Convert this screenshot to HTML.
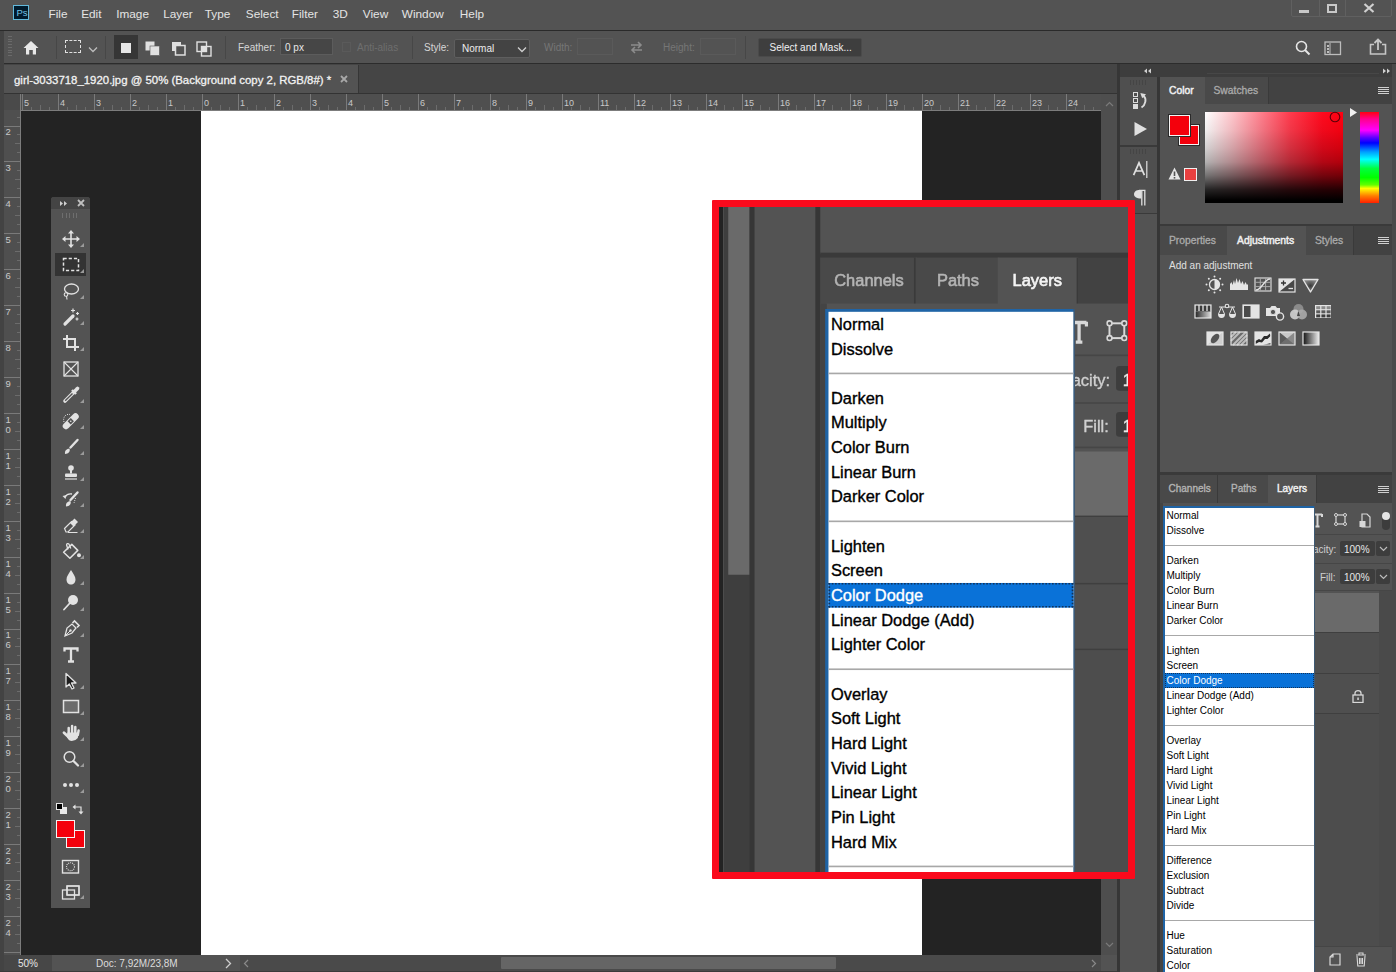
<!DOCTYPE html><html><head><meta charset="utf-8"><style>html,body{margin:0;padding:0}body{width:1396px;height:972px;overflow:hidden;position:relative;background:#535353;font-family:"Liberation Sans", sans-serif}</style></head><body><div style="position:absolute;left:0px;top:0px;width:1396px;height:30px;background:#535353;"></div><div style="position:absolute;left:0px;top:30px;width:1396px;height:1px;background:#2a2a2a;"></div><div style="position:absolute;left:13px;top:5px;width:16px;height:15px;background:#001a2c;box-sizing:border-box;border:1.2px solid #62b9dc;"></div><div style="position:absolute;left:16.5px;top:7.96px;font-size:9.5px;line-height:9.5px;color:#74c3e6;white-space:nowrap;">Ps</div><div style="position:absolute;left:48.5px;top:8.61px;font-size:11.8px;line-height:11.8px;color:#e4e4e4;white-space:nowrap;">File</div><div style="position:absolute;left:81.2px;top:8.61px;font-size:11.8px;line-height:11.8px;color:#e4e4e4;white-space:nowrap;">Edit</div><div style="position:absolute;left:116.2px;top:8.61px;font-size:11.8px;line-height:11.8px;color:#e4e4e4;white-space:nowrap;">Image</div><div style="position:absolute;left:163.20000000000002px;top:8.61px;font-size:11.8px;line-height:11.8px;color:#e4e4e4;white-space:nowrap;">Layer</div><div style="position:absolute;left:204.8px;top:8.61px;font-size:11.8px;line-height:11.8px;color:#e4e4e4;white-space:nowrap;">Type</div><div style="position:absolute;left:245.8px;top:8.61px;font-size:11.8px;line-height:11.8px;color:#e4e4e4;white-space:nowrap;">Select</div><div style="position:absolute;left:291.8px;top:8.61px;font-size:11.8px;line-height:11.8px;color:#e4e4e4;white-space:nowrap;">Filter</div><div style="position:absolute;left:332.8px;top:8.61px;font-size:11.8px;line-height:11.8px;color:#e4e4e4;white-space:nowrap;">3D</div><div style="position:absolute;left:362.8px;top:8.61px;font-size:11.8px;line-height:11.8px;color:#e4e4e4;white-space:nowrap;">View</div><div style="position:absolute;left:401.8px;top:8.61px;font-size:11.8px;line-height:11.8px;color:#e4e4e4;white-space:nowrap;">Window</div><div style="position:absolute;left:459.8px;top:8.61px;font-size:11.8px;line-height:11.8px;color:#e4e4e4;white-space:nowrap;">Help</div><div style="position:absolute;left:1291px;top:-1px;width:101px;height:18px;background:transparent;box-sizing:border-box;border:1px solid #606060;border-radius:0 0 2px 2px;"></div><div style="position:absolute;left:1319px;top:0px;width:1px;height:17px;background:#606060;"></div><div style="position:absolute;left:1345px;top:0px;width:1px;height:17px;background:#606060;"></div><div style="position:absolute;left:1299px;top:10px;width:10px;height:3px;background:#c8c8c8;"></div><div style="position:absolute;left:1327px;top:4px;width:10px;height:9px;background:transparent;box-sizing:border-box;border:2px solid #c8c8c8;"></div><svg style="position:absolute;left:1363px;top:3px;" width="12" height="10" viewBox="0 0 12 10"><path d="M1.5 1 L10.5 9 M10.5 1 L1.5 9" stroke="#d0d0d0" stroke-width="2.2"/></svg><div style="position:absolute;left:0px;top:31px;width:1396px;height:33px;background:#535353;"></div><div style="position:absolute;left:0px;top:63px;width:1396px;height:1px;background:#2c2c2c;"></div><div style="position:absolute;left:0px;top:31px;width:4px;height:941px;background:#434343;"></div><div style="position:absolute;left:8px;top:36.0px;width:4px;height:1px;background:#6a6a6a;"></div><div style="position:absolute;left:8px;top:38.7px;width:4px;height:1px;background:#6a6a6a;"></div><div style="position:absolute;left:8px;top:41.4px;width:4px;height:1px;background:#6a6a6a;"></div><div style="position:absolute;left:8px;top:44.1px;width:4px;height:1px;background:#6a6a6a;"></div><div style="position:absolute;left:8px;top:46.8px;width:4px;height:1px;background:#6a6a6a;"></div><div style="position:absolute;left:8px;top:49.5px;width:4px;height:1px;background:#6a6a6a;"></div><div style="position:absolute;left:8px;top:52.2px;width:4px;height:1px;background:#6a6a6a;"></div><div style="position:absolute;left:8px;top:54.900000000000006px;width:4px;height:1px;background:#6a6a6a;"></div><svg style="position:absolute;left:23px;top:40px;" width="16" height="15" viewBox="0 0 16 15"><path d="M8 1 L15.5 8 L13 8 L13 14.5 L9.8 14.5 L9.8 10 L6.2 10 L6.2 14.5 L3 14.5 L3 8 L0.5 8 Z" fill="#e8e8e8"/></svg><div style="position:absolute;left:56px;top:36px;width:1px;height:23px;background:#474747;"></div><div style="position:absolute;left:65px;top:40px;width:16px;height:13px;background:transparent;box-sizing:border-box;border:1.5px dashed #e0e0e0;"></div><svg style="position:absolute;left:88px;top:46px;" width="10" height="7" viewBox="0 0 10 7"><path d="M1 1.5 L5 5.5 L9 1.5" stroke="#bdbdbd" stroke-width="1.3" fill="none"/></svg><div style="position:absolute;left:105px;top:36px;width:1px;height:23px;background:#474747;"></div><div style="position:absolute;left:114px;top:35px;width:24px;height:24px;background:#363636;"></div><div style="position:absolute;left:121px;top:43px;width:10px;height:10px;background:#e6e6e6;"></div><svg style="position:absolute;left:145px;top:41px;" width="15" height="15" viewBox="0 0 15 15"><rect x="0.5" y="0.5" width="9" height="9" fill="#e0e0e0"/><rect x="5" y="5" width="9.5" height="9.5" fill="#e0e0e0" stroke="#535353" stroke-width="0.6"/></svg><svg style="position:absolute;left:171px;top:41px;" width="15" height="15" viewBox="0 0 15 15"><rect x="1" y="1" width="9" height="9" fill="#e0e0e0"/><rect x="4.5" y="4.5" width="9.5" height="9.5" fill="#535353" stroke="#e0e0e0" stroke-width="1.5"/></svg><svg style="position:absolute;left:196px;top:41px;" width="16" height="16" viewBox="0 0 16 16"><rect x="1" y="1" width="9.5" height="9.5" fill="none" stroke="#e0e0e0" stroke-width="1.4"/><rect x="5.5" y="5.5" width="9.5" height="9.5" fill="none" stroke="#e0e0e0" stroke-width="1.4"/><rect x="5.5" y="5.5" width="5" height="5" fill="#e0e0e0"/></svg><div style="position:absolute;left:225px;top:36px;width:1px;height:23px;background:#474747;"></div><div style="position:absolute;left:238px;top:42.83px;font-size:10px;line-height:10px;color:#d6d6d6;white-space:nowrap;">Feather:</div><div style="position:absolute;left:280px;top:38px;width:53px;height:17px;background:#464646;box-sizing:border-box;border:1px solid #5c5c5c;"></div><div style="position:absolute;left:285px;top:42.83px;font-size:10px;line-height:10px;color:#e8e8e8;white-space:nowrap;">0 px</div><div style="position:absolute;left:342px;top:42px;width:9px;height:10px;background:transparent;box-sizing:border-box;border:1px solid #5a5a5a;"></div><div style="position:absolute;left:357px;top:42.83px;font-size:10px;line-height:10px;color:#6e6e6e;white-space:nowrap;">Anti-alias</div><div style="position:absolute;left:412px;top:36px;width:1px;height:23px;background:#474747;"></div><div style="position:absolute;left:424px;top:42.83px;font-size:10px;line-height:10px;color:#d6d6d6;white-space:nowrap;">Style:</div><div style="position:absolute;left:454px;top:39px;width:76px;height:19px;background:#434343;box-sizing:border-box;border:1px solid #5e5e5e;border-radius:2px;"></div><div style="position:absolute;left:462px;top:43.53px;font-size:10px;line-height:10px;color:#ececec;white-space:nowrap;">Normal</div><svg style="position:absolute;left:517px;top:46px;" width="10" height="7" viewBox="0 0 10 7"><path d="M1 1.5 L5 5.5 L9 1.5" stroke="#cfcfcf" stroke-width="1.3" fill="none"/></svg><div style="position:absolute;left:544px;top:42.83px;font-size:10px;line-height:10px;color:#767676;white-space:nowrap;">Width:</div><div style="position:absolute;left:577px;top:38px;width:36px;height:17px;background:transparent;box-sizing:border-box;border:1px solid #5a5a5a;"></div><svg style="position:absolute;left:629px;top:40px;" width="15" height="15" viewBox="0 0 15 15"><path d="M2 5 L12 5 M9 2 L12 5 L9 8 M13 10 L3 10 M6 7 L3 10 L6 13" stroke="#8c8c8c" stroke-width="1.6" fill="none"/></svg><div style="position:absolute;left:663px;top:42.83px;font-size:10px;line-height:10px;color:#767676;white-space:nowrap;">Height:</div><div style="position:absolute;left:700px;top:38px;width:36px;height:17px;background:transparent;box-sizing:border-box;border:1px solid #5a5a5a;"></div><div style="position:absolute;left:745px;top:36px;width:1px;height:23px;background:#474747;"></div><div style="position:absolute;left:758px;top:38px;width:104px;height:19px;background:#3e3e3e;box-sizing:border-box;border:1px solid #4a4a4a;border-radius:2px;"></div><div style="position:absolute;left:769.5px;top:42.53px;font-size:10px;line-height:10px;color:#f0f0f0;white-space:nowrap;">Select and Mask...</div><svg style="position:absolute;left:1295px;top:40px;" width="16" height="16" viewBox="0 0 16 16"><circle cx="6.5" cy="6.5" r="5" stroke="#e6e6e6" stroke-width="1.6" fill="none"/><path d="M10 10 L14.5 14.5" stroke="#e6e6e6" stroke-width="2"/></svg><svg style="position:absolute;left:1324px;top:41px;" width="18" height="15" viewBox="0 0 18 15"><rect x="1" y="1" width="15.5" height="12.5" stroke="#bdbdbd" stroke-width="1.3" fill="none"/><rect x="3" y="4" width="2" height="2" fill="#bdbdbd"/><rect x="3" y="7" width="2" height="2" fill="#bdbdbd"/><rect x="3" y="10" width="2" height="2" fill="#bdbdbd"/><path d="M6 2 L6 13" stroke="#bdbdbd"/></svg><svg style="position:absolute;left:1369px;top:38px;" width="18" height="18" viewBox="0 0 18 18"><path d="M5 6.5 L1.5 6.5 L1.5 16 L16.5 16 L16.5 6.5 L13 6.5" stroke="#c6c6c6" stroke-width="1.6" fill="none"/><path d="M9 12 L9 2 M5.5 5 L9 1.5 L12.5 5" stroke="#c6c6c6" stroke-width="1.8" fill="none"/></svg><div style="position:absolute;left:4px;top:64px;width:1113px;height:29px;background:#454545;"></div><div style="position:absolute;left:4px;top:65px;width:354px;height:28px;background:#535353;"></div><div style="position:absolute;left:14px;top:74.83px;font-size:11.42px;line-height:11.42px;color:#f2f2f2;white-space:nowrap;-webkit-text-stroke:0.3px #f2f2f2;">girl-3033718_1920.jpg @ 50% (Background copy 2, RGB/8#) *</div><div style="position:absolute;left:358px;top:65px;width:1px;height:28px;background:#363636;"></div><svg style="position:absolute;left:340px;top:75px;" width="8" height="8" viewBox="0 0 8 8"><path d="M1 1 L7 7 M7 1 L1 7" stroke="#a8a8a8" stroke-width="1.8"/></svg><div style="position:absolute;left:4px;top:93px;width:1113px;height:1px;background:#333333;"></div><div style="position:absolute;left:4px;top:94px;width:1097px;height:17px;background:#4f4f4f;"></div><div style="position:absolute;left:4px;top:111px;width:17px;height:844px;background:#4f4f4f;"></div><div style="position:absolute;left:21px;top:110px;width:1080px;height:1px;background:#7c7c7c;"></div><div style="position:absolute;left:20px;top:94px;width:1px;height:861px;background:#7c7c7c;"></div><div style="position:absolute;left:4px;top:94px;width:16px;height:16px;background:#4a4a4a;"></div><div style="position:absolute;left:22px;top:94px;width:1px;height:16px;background:#7a7a7a;"></div><div style="position:absolute;left:24px;top:99.38px;font-size:9px;line-height:9px;color:#c9c9c9;white-space:nowrap;">5</div><div style="position:absolute;left:31px;top:107px;width:1px;height:3px;background:#6c6c6c;"></div><div style="position:absolute;left:40px;top:105px;width:1px;height:5px;background:#6c6c6c;"></div><div style="position:absolute;left:49px;top:107px;width:1px;height:3px;background:#6c6c6c;"></div><div style="position:absolute;left:58px;top:94px;width:1px;height:16px;background:#7a7a7a;"></div><div style="position:absolute;left:60px;top:99.38px;font-size:9px;line-height:9px;color:#c9c9c9;white-space:nowrap;">4</div><div style="position:absolute;left:67px;top:107px;width:1px;height:3px;background:#6c6c6c;"></div><div style="position:absolute;left:76px;top:105px;width:1px;height:5px;background:#6c6c6c;"></div><div style="position:absolute;left:85px;top:107px;width:1px;height:3px;background:#6c6c6c;"></div><div style="position:absolute;left:94px;top:94px;width:1px;height:16px;background:#7a7a7a;"></div><div style="position:absolute;left:96px;top:99.38px;font-size:9px;line-height:9px;color:#c9c9c9;white-space:nowrap;">3</div><div style="position:absolute;left:103px;top:107px;width:1px;height:3px;background:#6c6c6c;"></div><div style="position:absolute;left:112px;top:105px;width:1px;height:5px;background:#6c6c6c;"></div><div style="position:absolute;left:121px;top:107px;width:1px;height:3px;background:#6c6c6c;"></div><div style="position:absolute;left:130px;top:94px;width:1px;height:16px;background:#7a7a7a;"></div><div style="position:absolute;left:132px;top:99.38px;font-size:9px;line-height:9px;color:#c9c9c9;white-space:nowrap;">2</div><div style="position:absolute;left:139px;top:107px;width:1px;height:3px;background:#6c6c6c;"></div><div style="position:absolute;left:148px;top:105px;width:1px;height:5px;background:#6c6c6c;"></div><div style="position:absolute;left:157px;top:107px;width:1px;height:3px;background:#6c6c6c;"></div><div style="position:absolute;left:166px;top:94px;width:1px;height:16px;background:#7a7a7a;"></div><div style="position:absolute;left:168px;top:99.38px;font-size:9px;line-height:9px;color:#c9c9c9;white-space:nowrap;">1</div><div style="position:absolute;left:175px;top:107px;width:1px;height:3px;background:#6c6c6c;"></div><div style="position:absolute;left:184px;top:105px;width:1px;height:5px;background:#6c6c6c;"></div><div style="position:absolute;left:193px;top:107px;width:1px;height:3px;background:#6c6c6c;"></div><div style="position:absolute;left:202px;top:94px;width:1px;height:16px;background:#7a7a7a;"></div><div style="position:absolute;left:204px;top:99.38px;font-size:9px;line-height:9px;color:#c9c9c9;white-space:nowrap;">0</div><div style="position:absolute;left:211px;top:107px;width:1px;height:3px;background:#6c6c6c;"></div><div style="position:absolute;left:220px;top:105px;width:1px;height:5px;background:#6c6c6c;"></div><div style="position:absolute;left:229px;top:107px;width:1px;height:3px;background:#6c6c6c;"></div><div style="position:absolute;left:238px;top:94px;width:1px;height:16px;background:#7a7a7a;"></div><div style="position:absolute;left:240px;top:99.38px;font-size:9px;line-height:9px;color:#c9c9c9;white-space:nowrap;">1</div><div style="position:absolute;left:247px;top:107px;width:1px;height:3px;background:#6c6c6c;"></div><div style="position:absolute;left:256px;top:105px;width:1px;height:5px;background:#6c6c6c;"></div><div style="position:absolute;left:265px;top:107px;width:1px;height:3px;background:#6c6c6c;"></div><div style="position:absolute;left:274px;top:94px;width:1px;height:16px;background:#7a7a7a;"></div><div style="position:absolute;left:276px;top:99.38px;font-size:9px;line-height:9px;color:#c9c9c9;white-space:nowrap;">2</div><div style="position:absolute;left:283px;top:107px;width:1px;height:3px;background:#6c6c6c;"></div><div style="position:absolute;left:292px;top:105px;width:1px;height:5px;background:#6c6c6c;"></div><div style="position:absolute;left:301px;top:107px;width:1px;height:3px;background:#6c6c6c;"></div><div style="position:absolute;left:310px;top:94px;width:1px;height:16px;background:#7a7a7a;"></div><div style="position:absolute;left:312px;top:99.38px;font-size:9px;line-height:9px;color:#c9c9c9;white-space:nowrap;">3</div><div style="position:absolute;left:319px;top:107px;width:1px;height:3px;background:#6c6c6c;"></div><div style="position:absolute;left:328px;top:105px;width:1px;height:5px;background:#6c6c6c;"></div><div style="position:absolute;left:337px;top:107px;width:1px;height:3px;background:#6c6c6c;"></div><div style="position:absolute;left:346px;top:94px;width:1px;height:16px;background:#7a7a7a;"></div><div style="position:absolute;left:348px;top:99.38px;font-size:9px;line-height:9px;color:#c9c9c9;white-space:nowrap;">4</div><div style="position:absolute;left:355px;top:107px;width:1px;height:3px;background:#6c6c6c;"></div><div style="position:absolute;left:364px;top:105px;width:1px;height:5px;background:#6c6c6c;"></div><div style="position:absolute;left:373px;top:107px;width:1px;height:3px;background:#6c6c6c;"></div><div style="position:absolute;left:382px;top:94px;width:1px;height:16px;background:#7a7a7a;"></div><div style="position:absolute;left:384px;top:99.38px;font-size:9px;line-height:9px;color:#c9c9c9;white-space:nowrap;">5</div><div style="position:absolute;left:391px;top:107px;width:1px;height:3px;background:#6c6c6c;"></div><div style="position:absolute;left:400px;top:105px;width:1px;height:5px;background:#6c6c6c;"></div><div style="position:absolute;left:409px;top:107px;width:1px;height:3px;background:#6c6c6c;"></div><div style="position:absolute;left:418px;top:94px;width:1px;height:16px;background:#7a7a7a;"></div><div style="position:absolute;left:420px;top:99.38px;font-size:9px;line-height:9px;color:#c9c9c9;white-space:nowrap;">6</div><div style="position:absolute;left:427px;top:107px;width:1px;height:3px;background:#6c6c6c;"></div><div style="position:absolute;left:436px;top:105px;width:1px;height:5px;background:#6c6c6c;"></div><div style="position:absolute;left:445px;top:107px;width:1px;height:3px;background:#6c6c6c;"></div><div style="position:absolute;left:454px;top:94px;width:1px;height:16px;background:#7a7a7a;"></div><div style="position:absolute;left:456px;top:99.38px;font-size:9px;line-height:9px;color:#c9c9c9;white-space:nowrap;">7</div><div style="position:absolute;left:463px;top:107px;width:1px;height:3px;background:#6c6c6c;"></div><div style="position:absolute;left:472px;top:105px;width:1px;height:5px;background:#6c6c6c;"></div><div style="position:absolute;left:481px;top:107px;width:1px;height:3px;background:#6c6c6c;"></div><div style="position:absolute;left:490px;top:94px;width:1px;height:16px;background:#7a7a7a;"></div><div style="position:absolute;left:492px;top:99.38px;font-size:9px;line-height:9px;color:#c9c9c9;white-space:nowrap;">8</div><div style="position:absolute;left:499px;top:107px;width:1px;height:3px;background:#6c6c6c;"></div><div style="position:absolute;left:508px;top:105px;width:1px;height:5px;background:#6c6c6c;"></div><div style="position:absolute;left:517px;top:107px;width:1px;height:3px;background:#6c6c6c;"></div><div style="position:absolute;left:526px;top:94px;width:1px;height:16px;background:#7a7a7a;"></div><div style="position:absolute;left:528px;top:99.38px;font-size:9px;line-height:9px;color:#c9c9c9;white-space:nowrap;">9</div><div style="position:absolute;left:535px;top:107px;width:1px;height:3px;background:#6c6c6c;"></div><div style="position:absolute;left:544px;top:105px;width:1px;height:5px;background:#6c6c6c;"></div><div style="position:absolute;left:553px;top:107px;width:1px;height:3px;background:#6c6c6c;"></div><div style="position:absolute;left:562px;top:94px;width:1px;height:16px;background:#7a7a7a;"></div><div style="position:absolute;left:564px;top:99.38px;font-size:9px;line-height:9px;color:#c9c9c9;white-space:nowrap;">10</div><div style="position:absolute;left:571px;top:107px;width:1px;height:3px;background:#6c6c6c;"></div><div style="position:absolute;left:580px;top:105px;width:1px;height:5px;background:#6c6c6c;"></div><div style="position:absolute;left:589px;top:107px;width:1px;height:3px;background:#6c6c6c;"></div><div style="position:absolute;left:598px;top:94px;width:1px;height:16px;background:#7a7a7a;"></div><div style="position:absolute;left:600px;top:99.38px;font-size:9px;line-height:9px;color:#c9c9c9;white-space:nowrap;">11</div><div style="position:absolute;left:607px;top:107px;width:1px;height:3px;background:#6c6c6c;"></div><div style="position:absolute;left:616px;top:105px;width:1px;height:5px;background:#6c6c6c;"></div><div style="position:absolute;left:625px;top:107px;width:1px;height:3px;background:#6c6c6c;"></div><div style="position:absolute;left:634px;top:94px;width:1px;height:16px;background:#7a7a7a;"></div><div style="position:absolute;left:636px;top:99.38px;font-size:9px;line-height:9px;color:#c9c9c9;white-space:nowrap;">12</div><div style="position:absolute;left:643px;top:107px;width:1px;height:3px;background:#6c6c6c;"></div><div style="position:absolute;left:652px;top:105px;width:1px;height:5px;background:#6c6c6c;"></div><div style="position:absolute;left:661px;top:107px;width:1px;height:3px;background:#6c6c6c;"></div><div style="position:absolute;left:670px;top:94px;width:1px;height:16px;background:#7a7a7a;"></div><div style="position:absolute;left:672px;top:99.38px;font-size:9px;line-height:9px;color:#c9c9c9;white-space:nowrap;">13</div><div style="position:absolute;left:679px;top:107px;width:1px;height:3px;background:#6c6c6c;"></div><div style="position:absolute;left:688px;top:105px;width:1px;height:5px;background:#6c6c6c;"></div><div style="position:absolute;left:697px;top:107px;width:1px;height:3px;background:#6c6c6c;"></div><div style="position:absolute;left:706px;top:94px;width:1px;height:16px;background:#7a7a7a;"></div><div style="position:absolute;left:708px;top:99.38px;font-size:9px;line-height:9px;color:#c9c9c9;white-space:nowrap;">14</div><div style="position:absolute;left:715px;top:107px;width:1px;height:3px;background:#6c6c6c;"></div><div style="position:absolute;left:724px;top:105px;width:1px;height:5px;background:#6c6c6c;"></div><div style="position:absolute;left:733px;top:107px;width:1px;height:3px;background:#6c6c6c;"></div><div style="position:absolute;left:742px;top:94px;width:1px;height:16px;background:#7a7a7a;"></div><div style="position:absolute;left:744px;top:99.38px;font-size:9px;line-height:9px;color:#c9c9c9;white-space:nowrap;">15</div><div style="position:absolute;left:751px;top:107px;width:1px;height:3px;background:#6c6c6c;"></div><div style="position:absolute;left:760px;top:105px;width:1px;height:5px;background:#6c6c6c;"></div><div style="position:absolute;left:769px;top:107px;width:1px;height:3px;background:#6c6c6c;"></div><div style="position:absolute;left:778px;top:94px;width:1px;height:16px;background:#7a7a7a;"></div><div style="position:absolute;left:780px;top:99.38px;font-size:9px;line-height:9px;color:#c9c9c9;white-space:nowrap;">16</div><div style="position:absolute;left:787px;top:107px;width:1px;height:3px;background:#6c6c6c;"></div><div style="position:absolute;left:796px;top:105px;width:1px;height:5px;background:#6c6c6c;"></div><div style="position:absolute;left:805px;top:107px;width:1px;height:3px;background:#6c6c6c;"></div><div style="position:absolute;left:814px;top:94px;width:1px;height:16px;background:#7a7a7a;"></div><div style="position:absolute;left:816px;top:99.38px;font-size:9px;line-height:9px;color:#c9c9c9;white-space:nowrap;">17</div><div style="position:absolute;left:823px;top:107px;width:1px;height:3px;background:#6c6c6c;"></div><div style="position:absolute;left:832px;top:105px;width:1px;height:5px;background:#6c6c6c;"></div><div style="position:absolute;left:841px;top:107px;width:1px;height:3px;background:#6c6c6c;"></div><div style="position:absolute;left:850px;top:94px;width:1px;height:16px;background:#7a7a7a;"></div><div style="position:absolute;left:852px;top:99.38px;font-size:9px;line-height:9px;color:#c9c9c9;white-space:nowrap;">18</div><div style="position:absolute;left:859px;top:107px;width:1px;height:3px;background:#6c6c6c;"></div><div style="position:absolute;left:868px;top:105px;width:1px;height:5px;background:#6c6c6c;"></div><div style="position:absolute;left:877px;top:107px;width:1px;height:3px;background:#6c6c6c;"></div><div style="position:absolute;left:886px;top:94px;width:1px;height:16px;background:#7a7a7a;"></div><div style="position:absolute;left:888px;top:99.38px;font-size:9px;line-height:9px;color:#c9c9c9;white-space:nowrap;">19</div><div style="position:absolute;left:895px;top:107px;width:1px;height:3px;background:#6c6c6c;"></div><div style="position:absolute;left:904px;top:105px;width:1px;height:5px;background:#6c6c6c;"></div><div style="position:absolute;left:913px;top:107px;width:1px;height:3px;background:#6c6c6c;"></div><div style="position:absolute;left:922px;top:94px;width:1px;height:16px;background:#7a7a7a;"></div><div style="position:absolute;left:924px;top:99.38px;font-size:9px;line-height:9px;color:#c9c9c9;white-space:nowrap;">20</div><div style="position:absolute;left:931px;top:107px;width:1px;height:3px;background:#6c6c6c;"></div><div style="position:absolute;left:940px;top:105px;width:1px;height:5px;background:#6c6c6c;"></div><div style="position:absolute;left:949px;top:107px;width:1px;height:3px;background:#6c6c6c;"></div><div style="position:absolute;left:958px;top:94px;width:1px;height:16px;background:#7a7a7a;"></div><div style="position:absolute;left:960px;top:99.38px;font-size:9px;line-height:9px;color:#c9c9c9;white-space:nowrap;">21</div><div style="position:absolute;left:967px;top:107px;width:1px;height:3px;background:#6c6c6c;"></div><div style="position:absolute;left:976px;top:105px;width:1px;height:5px;background:#6c6c6c;"></div><div style="position:absolute;left:985px;top:107px;width:1px;height:3px;background:#6c6c6c;"></div><div style="position:absolute;left:994px;top:94px;width:1px;height:16px;background:#7a7a7a;"></div><div style="position:absolute;left:996px;top:99.38px;font-size:9px;line-height:9px;color:#c9c9c9;white-space:nowrap;">22</div><div style="position:absolute;left:1003px;top:107px;width:1px;height:3px;background:#6c6c6c;"></div><div style="position:absolute;left:1012px;top:105px;width:1px;height:5px;background:#6c6c6c;"></div><div style="position:absolute;left:1021px;top:107px;width:1px;height:3px;background:#6c6c6c;"></div><div style="position:absolute;left:1030px;top:94px;width:1px;height:16px;background:#7a7a7a;"></div><div style="position:absolute;left:1032px;top:99.38px;font-size:9px;line-height:9px;color:#c9c9c9;white-space:nowrap;">23</div><div style="position:absolute;left:1039px;top:107px;width:1px;height:3px;background:#6c6c6c;"></div><div style="position:absolute;left:1048px;top:105px;width:1px;height:5px;background:#6c6c6c;"></div><div style="position:absolute;left:1057px;top:107px;width:1px;height:3px;background:#6c6c6c;"></div><div style="position:absolute;left:1066px;top:94px;width:1px;height:16px;background:#7a7a7a;"></div><div style="position:absolute;left:1068px;top:99.38px;font-size:9px;line-height:9px;color:#c9c9c9;white-space:nowrap;">24</div><div style="position:absolute;left:1075px;top:107px;width:1px;height:3px;background:#6c6c6c;"></div><div style="position:absolute;left:1084px;top:105px;width:1px;height:5px;background:#6c6c6c;"></div><div style="position:absolute;left:1093px;top:107px;width:1px;height:3px;background:#6c6c6c;"></div><div style="position:absolute;left:17px;top:117px;width:3px;height:1px;background:#6c6c6c;"></div><div style="position:absolute;left:4px;top:126px;width:16px;height:1px;background:#7a7a7a;"></div><div style="position:absolute;left:5.5px;top:127.46px;font-size:9.5px;line-height:9.5px;color:#c9c9c9;white-space:nowrap;">2</div><div style="position:absolute;left:17px;top:134px;width:3px;height:1px;background:#6c6c6c;"></div><div style="position:absolute;left:15px;top:143px;width:5px;height:1px;background:#6c6c6c;"></div><div style="position:absolute;left:17px;top:152px;width:3px;height:1px;background:#6c6c6c;"></div><div style="position:absolute;left:4px;top:161px;width:16px;height:1px;background:#7a7a7a;"></div><div style="position:absolute;left:5.5px;top:163.39px;font-size:9.5px;line-height:9.5px;color:#c9c9c9;white-space:nowrap;">3</div><div style="position:absolute;left:17px;top:170px;width:3px;height:1px;background:#6c6c6c;"></div><div style="position:absolute;left:15px;top:179px;width:5px;height:1px;background:#6c6c6c;"></div><div style="position:absolute;left:17px;top:188px;width:3px;height:1px;background:#6c6c6c;"></div><div style="position:absolute;left:4px;top:197px;width:16px;height:1px;background:#7a7a7a;"></div><div style="position:absolute;left:5.5px;top:199.32px;font-size:9.5px;line-height:9.5px;color:#c9c9c9;white-space:nowrap;">4</div><div style="position:absolute;left:17px;top:206px;width:3px;height:1px;background:#6c6c6c;"></div><div style="position:absolute;left:15px;top:215px;width:5px;height:1px;background:#6c6c6c;"></div><div style="position:absolute;left:17px;top:224px;width:3px;height:1px;background:#6c6c6c;"></div><div style="position:absolute;left:4px;top:233px;width:16px;height:1px;background:#7a7a7a;"></div><div style="position:absolute;left:5.5px;top:235.25px;font-size:9.5px;line-height:9.5px;color:#c9c9c9;white-space:nowrap;">5</div><div style="position:absolute;left:17px;top:242px;width:3px;height:1px;background:#6c6c6c;"></div><div style="position:absolute;left:15px;top:251px;width:5px;height:1px;background:#6c6c6c;"></div><div style="position:absolute;left:17px;top:260px;width:3px;height:1px;background:#6c6c6c;"></div><div style="position:absolute;left:4px;top:269px;width:16px;height:1px;background:#7a7a7a;"></div><div style="position:absolute;left:5.5px;top:271.18px;font-size:9.5px;line-height:9.5px;color:#c9c9c9;white-space:nowrap;">6</div><div style="position:absolute;left:17px;top:278px;width:3px;height:1px;background:#6c6c6c;"></div><div style="position:absolute;left:15px;top:287px;width:5px;height:1px;background:#6c6c6c;"></div><div style="position:absolute;left:17px;top:296px;width:3px;height:1px;background:#6c6c6c;"></div><div style="position:absolute;left:4px;top:305px;width:16px;height:1px;background:#7a7a7a;"></div><div style="position:absolute;left:5.5px;top:307.11px;font-size:9.5px;line-height:9.5px;color:#c9c9c9;white-space:nowrap;">7</div><div style="position:absolute;left:17px;top:314px;width:3px;height:1px;background:#6c6c6c;"></div><div style="position:absolute;left:15px;top:323px;width:5px;height:1px;background:#6c6c6c;"></div><div style="position:absolute;left:17px;top:332px;width:3px;height:1px;background:#6c6c6c;"></div><div style="position:absolute;left:4px;top:341px;width:16px;height:1px;background:#7a7a7a;"></div><div style="position:absolute;left:5.5px;top:343.04px;font-size:9.5px;line-height:9.5px;color:#c9c9c9;white-space:nowrap;">8</div><div style="position:absolute;left:17px;top:350px;width:3px;height:1px;background:#6c6c6c;"></div><div style="position:absolute;left:15px;top:359px;width:5px;height:1px;background:#6c6c6c;"></div><div style="position:absolute;left:17px;top:368px;width:3px;height:1px;background:#6c6c6c;"></div><div style="position:absolute;left:4px;top:377px;width:16px;height:1px;background:#7a7a7a;"></div><div style="position:absolute;left:5.5px;top:378.97px;font-size:9.5px;line-height:9.5px;color:#c9c9c9;white-space:nowrap;">9</div><div style="position:absolute;left:17px;top:386px;width:3px;height:1px;background:#6c6c6c;"></div><div style="position:absolute;left:15px;top:395px;width:5px;height:1px;background:#6c6c6c;"></div><div style="position:absolute;left:17px;top:404px;width:3px;height:1px;background:#6c6c6c;"></div><div style="position:absolute;left:4px;top:413px;width:16px;height:1px;background:#7a7a7a;"></div><div style="position:absolute;left:5.5px;top:414.90px;font-size:9.5px;line-height:9.5px;color:#c9c9c9;white-space:nowrap;">1</div><div style="position:absolute;left:5.5px;top:424.90px;font-size:9.5px;line-height:9.5px;color:#c9c9c9;white-space:nowrap;">0</div><div style="position:absolute;left:17px;top:422px;width:3px;height:1px;background:#6c6c6c;"></div><div style="position:absolute;left:15px;top:431px;width:5px;height:1px;background:#6c6c6c;"></div><div style="position:absolute;left:17px;top:440px;width:3px;height:1px;background:#6c6c6c;"></div><div style="position:absolute;left:4px;top:449px;width:16px;height:1px;background:#7a7a7a;"></div><div style="position:absolute;left:5.5px;top:450.83px;font-size:9.5px;line-height:9.5px;color:#c9c9c9;white-space:nowrap;">1</div><div style="position:absolute;left:5.5px;top:460.83px;font-size:9.5px;line-height:9.5px;color:#c9c9c9;white-space:nowrap;">1</div><div style="position:absolute;left:17px;top:458px;width:3px;height:1px;background:#6c6c6c;"></div><div style="position:absolute;left:15px;top:467px;width:5px;height:1px;background:#6c6c6c;"></div><div style="position:absolute;left:17px;top:476px;width:3px;height:1px;background:#6c6c6c;"></div><div style="position:absolute;left:4px;top:485px;width:16px;height:1px;background:#7a7a7a;"></div><div style="position:absolute;left:5.5px;top:486.76px;font-size:9.5px;line-height:9.5px;color:#c9c9c9;white-space:nowrap;">1</div><div style="position:absolute;left:5.5px;top:496.76px;font-size:9.5px;line-height:9.5px;color:#c9c9c9;white-space:nowrap;">2</div><div style="position:absolute;left:17px;top:494px;width:3px;height:1px;background:#6c6c6c;"></div><div style="position:absolute;left:15px;top:503px;width:5px;height:1px;background:#6c6c6c;"></div><div style="position:absolute;left:17px;top:512px;width:3px;height:1px;background:#6c6c6c;"></div><div style="position:absolute;left:4px;top:521px;width:16px;height:1px;background:#7a7a7a;"></div><div style="position:absolute;left:5.5px;top:522.69px;font-size:9.5px;line-height:9.5px;color:#c9c9c9;white-space:nowrap;">1</div><div style="position:absolute;left:5.5px;top:532.69px;font-size:9.5px;line-height:9.5px;color:#c9c9c9;white-space:nowrap;">3</div><div style="position:absolute;left:17px;top:530px;width:3px;height:1px;background:#6c6c6c;"></div><div style="position:absolute;left:15px;top:539px;width:5px;height:1px;background:#6c6c6c;"></div><div style="position:absolute;left:17px;top:548px;width:3px;height:1px;background:#6c6c6c;"></div><div style="position:absolute;left:4px;top:557px;width:16px;height:1px;background:#7a7a7a;"></div><div style="position:absolute;left:5.5px;top:558.62px;font-size:9.5px;line-height:9.5px;color:#c9c9c9;white-space:nowrap;">1</div><div style="position:absolute;left:5.5px;top:568.62px;font-size:9.5px;line-height:9.5px;color:#c9c9c9;white-space:nowrap;">4</div><div style="position:absolute;left:17px;top:566px;width:3px;height:1px;background:#6c6c6c;"></div><div style="position:absolute;left:15px;top:575px;width:5px;height:1px;background:#6c6c6c;"></div><div style="position:absolute;left:17px;top:584px;width:3px;height:1px;background:#6c6c6c;"></div><div style="position:absolute;left:4px;top:593px;width:16px;height:1px;background:#7a7a7a;"></div><div style="position:absolute;left:5.5px;top:594.55px;font-size:9.5px;line-height:9.5px;color:#c9c9c9;white-space:nowrap;">1</div><div style="position:absolute;left:5.5px;top:604.55px;font-size:9.5px;line-height:9.5px;color:#c9c9c9;white-space:nowrap;">5</div><div style="position:absolute;left:17px;top:602px;width:3px;height:1px;background:#6c6c6c;"></div><div style="position:absolute;left:15px;top:611px;width:5px;height:1px;background:#6c6c6c;"></div><div style="position:absolute;left:17px;top:620px;width:3px;height:1px;background:#6c6c6c;"></div><div style="position:absolute;left:4px;top:629px;width:16px;height:1px;background:#7a7a7a;"></div><div style="position:absolute;left:5.5px;top:630.48px;font-size:9.5px;line-height:9.5px;color:#c9c9c9;white-space:nowrap;">1</div><div style="position:absolute;left:5.5px;top:640.48px;font-size:9.5px;line-height:9.5px;color:#c9c9c9;white-space:nowrap;">6</div><div style="position:absolute;left:17px;top:638px;width:3px;height:1px;background:#6c6c6c;"></div><div style="position:absolute;left:15px;top:646px;width:5px;height:1px;background:#6c6c6c;"></div><div style="position:absolute;left:17px;top:655px;width:3px;height:1px;background:#6c6c6c;"></div><div style="position:absolute;left:4px;top:664px;width:16px;height:1px;background:#7a7a7a;"></div><div style="position:absolute;left:5.5px;top:666.41px;font-size:9.5px;line-height:9.5px;color:#c9c9c9;white-space:nowrap;">1</div><div style="position:absolute;left:5.5px;top:676.41px;font-size:9.5px;line-height:9.5px;color:#c9c9c9;white-space:nowrap;">7</div><div style="position:absolute;left:17px;top:673px;width:3px;height:1px;background:#6c6c6c;"></div><div style="position:absolute;left:15px;top:682px;width:5px;height:1px;background:#6c6c6c;"></div><div style="position:absolute;left:17px;top:691px;width:3px;height:1px;background:#6c6c6c;"></div><div style="position:absolute;left:4px;top:700px;width:16px;height:1px;background:#7a7a7a;"></div><div style="position:absolute;left:5.5px;top:702.34px;font-size:9.5px;line-height:9.5px;color:#c9c9c9;white-space:nowrap;">1</div><div style="position:absolute;left:5.5px;top:712.34px;font-size:9.5px;line-height:9.5px;color:#c9c9c9;white-space:nowrap;">8</div><div style="position:absolute;left:17px;top:709px;width:3px;height:1px;background:#6c6c6c;"></div><div style="position:absolute;left:15px;top:718px;width:5px;height:1px;background:#6c6c6c;"></div><div style="position:absolute;left:17px;top:727px;width:3px;height:1px;background:#6c6c6c;"></div><div style="position:absolute;left:4px;top:736px;width:16px;height:1px;background:#7a7a7a;"></div><div style="position:absolute;left:5.5px;top:738.27px;font-size:9.5px;line-height:9.5px;color:#c9c9c9;white-space:nowrap;">1</div><div style="position:absolute;left:5.5px;top:748.27px;font-size:9.5px;line-height:9.5px;color:#c9c9c9;white-space:nowrap;">9</div><div style="position:absolute;left:17px;top:745px;width:3px;height:1px;background:#6c6c6c;"></div><div style="position:absolute;left:15px;top:754px;width:5px;height:1px;background:#6c6c6c;"></div><div style="position:absolute;left:17px;top:763px;width:3px;height:1px;background:#6c6c6c;"></div><div style="position:absolute;left:4px;top:772px;width:16px;height:1px;background:#7a7a7a;"></div><div style="position:absolute;left:5.5px;top:774.20px;font-size:9.5px;line-height:9.5px;color:#c9c9c9;white-space:nowrap;">2</div><div style="position:absolute;left:5.5px;top:784.20px;font-size:9.5px;line-height:9.5px;color:#c9c9c9;white-space:nowrap;">0</div><div style="position:absolute;left:17px;top:781px;width:3px;height:1px;background:#6c6c6c;"></div><div style="position:absolute;left:15px;top:790px;width:5px;height:1px;background:#6c6c6c;"></div><div style="position:absolute;left:17px;top:799px;width:3px;height:1px;background:#6c6c6c;"></div><div style="position:absolute;left:4px;top:808px;width:16px;height:1px;background:#7a7a7a;"></div><div style="position:absolute;left:5.5px;top:810.13px;font-size:9.5px;line-height:9.5px;color:#c9c9c9;white-space:nowrap;">2</div><div style="position:absolute;left:5.5px;top:820.13px;font-size:9.5px;line-height:9.5px;color:#c9c9c9;white-space:nowrap;">1</div><div style="position:absolute;left:17px;top:817px;width:3px;height:1px;background:#6c6c6c;"></div><div style="position:absolute;left:15px;top:826px;width:5px;height:1px;background:#6c6c6c;"></div><div style="position:absolute;left:17px;top:835px;width:3px;height:1px;background:#6c6c6c;"></div><div style="position:absolute;left:4px;top:844px;width:16px;height:1px;background:#7a7a7a;"></div><div style="position:absolute;left:5.5px;top:846.06px;font-size:9.5px;line-height:9.5px;color:#c9c9c9;white-space:nowrap;">2</div><div style="position:absolute;left:5.5px;top:856.06px;font-size:9.5px;line-height:9.5px;color:#c9c9c9;white-space:nowrap;">2</div><div style="position:absolute;left:17px;top:853px;width:3px;height:1px;background:#6c6c6c;"></div><div style="position:absolute;left:15px;top:862px;width:5px;height:1px;background:#6c6c6c;"></div><div style="position:absolute;left:17px;top:871px;width:3px;height:1px;background:#6c6c6c;"></div><div style="position:absolute;left:4px;top:880px;width:16px;height:1px;background:#7a7a7a;"></div><div style="position:absolute;left:5.5px;top:881.99px;font-size:9.5px;line-height:9.5px;color:#c9c9c9;white-space:nowrap;">2</div><div style="position:absolute;left:5.5px;top:891.99px;font-size:9.5px;line-height:9.5px;color:#c9c9c9;white-space:nowrap;">3</div><div style="position:absolute;left:17px;top:889px;width:3px;height:1px;background:#6c6c6c;"></div><div style="position:absolute;left:15px;top:898px;width:5px;height:1px;background:#6c6c6c;"></div><div style="position:absolute;left:17px;top:907px;width:3px;height:1px;background:#6c6c6c;"></div><div style="position:absolute;left:4px;top:916px;width:16px;height:1px;background:#7a7a7a;"></div><div style="position:absolute;left:5.5px;top:917.92px;font-size:9.5px;line-height:9.5px;color:#c9c9c9;white-space:nowrap;">2</div><div style="position:absolute;left:5.5px;top:927.92px;font-size:9.5px;line-height:9.5px;color:#c9c9c9;white-space:nowrap;">4</div><div style="position:absolute;left:17px;top:925px;width:3px;height:1px;background:#6c6c6c;"></div><div style="position:absolute;left:15px;top:934px;width:5px;height:1px;background:#6c6c6c;"></div><div style="position:absolute;left:17px;top:943px;width:3px;height:1px;background:#6c6c6c;"></div><div style="position:absolute;left:4px;top:952px;width:16px;height:1px;background:#7a7a7a;"></div><div style="position:absolute;left:5.5px;top:953.85px;font-size:9.5px;line-height:9.5px;color:#c9c9c9;white-space:nowrap;">2</div><div style="position:absolute;left:5.5px;top:963.85px;font-size:9.5px;line-height:9.5px;color:#c9c9c9;white-space:nowrap;">5</div><div style="position:absolute;left:21px;top:111px;width:1080px;height:844px;background:#232323;"></div><div style="position:absolute;left:201px;top:111px;width:721px;height:844px;background:#ffffff;"></div><div style="position:absolute;left:4px;top:955px;width:1113px;height:17px;background:#535353;"></div><div style="position:absolute;left:4px;top:955px;width:48px;height:16px;background:#474747;"></div><div style="position:absolute;left:18px;top:958.53px;font-size:10px;line-height:10px;color:#e6e6e6;white-space:nowrap;">50%</div><div style="position:absolute;left:96px;top:958.53px;font-size:10px;line-height:10px;color:#dcdcdc;white-space:nowrap;">Doc: 7,92M/23,8M</div><svg style="position:absolute;left:225px;top:958px;" width="7" height="11" viewBox="0 0 7 11"><path d="M1 1 L5.5 5.5 L1 10" stroke="#cfcfcf" stroke-width="1.3" fill="none"/></svg><div style="position:absolute;left:240px;top:955px;width:861px;height:16px;background:#4a4a4a;"></div><svg style="position:absolute;left:243px;top:959px;" width="6" height="9" viewBox="0 0 6 9"><path d="M5 1 L1.5 4.5 L5 8" stroke="#8a8a8a" stroke-width="1.2" fill="none"/></svg><div style="position:absolute;left:501px;top:957px;width:335px;height:12px;background:#656565;border-radius:1px;"></div><svg style="position:absolute;left:1091px;top:959px;" width="6" height="9" viewBox="0 0 6 9"><path d="M1 1 L4.5 4.5 L1 8" stroke="#8a8a8a" stroke-width="1.2" fill="none"/></svg><div style="position:absolute;left:0px;top:971px;width:1396px;height:1px;background:#3a3a3a;"></div><div style="position:absolute;left:51px;top:197px;width:39px;height:711px;background:#535353;border-radius:3px 3px 0 0;"></div><div style="position:absolute;left:51px;top:197px;width:39px;height:12px;background:#444444;border-radius:3px 3px 0 0;"></div><svg style="position:absolute;left:59px;top:200px;" width="10" height="7" viewBox="0 0 10 7"><path d="M1 1 L4 3.5 L1 6 Z M5 1 L8 3.5 L5 6 Z" fill="#cfcfcf"/></svg><svg style="position:absolute;left:77px;top:199px;" width="8" height="8" viewBox="0 0 8 8"><path d="M1 1 L7 7 M7 1 L1 7" stroke="#bfbfbf" stroke-width="1.8"/></svg><div style="position:absolute;left:62.0px;top:213px;width:1px;height:5px;background:#6e6e6e;"></div><div style="position:absolute;left:65.5px;top:213px;width:1px;height:5px;background:#6e6e6e;"></div><div style="position:absolute;left:69.0px;top:213px;width:1px;height:5px;background:#6e6e6e;"></div><div style="position:absolute;left:72.5px;top:213px;width:1px;height:5px;background:#6e6e6e;"></div><div style="position:absolute;left:76.0px;top:213px;width:1px;height:5px;background:#6e6e6e;"></div><div style="position:absolute;left:55px;top:253px;width:31px;height:23px;background:#333333;"></div><svg style="position:absolute;left:60.5px;top:229px;" width="20" height="20" viewBox="0 0 20 20"><path d="M10 3 L10 17 M3 10 L17 10" stroke="#e2e2e2" stroke-width="1.6"/><path d="M10 1 L13 4.5 L7 4.5 Z M10 19 L13 15.5 L7 15.5 Z M1 10 L4.5 7 L4.5 13 Z M19 10 L15.5 7 L15.5 13 Z" fill="#e2e2e2"/></svg><svg style="position:absolute;left:80px;top:243px;" width="4" height="4" viewBox="0 0 4 4"><path d="M4 0 L4 4 L0 4 Z" fill="#9a9a9a"/></svg><svg style="position:absolute;left:60.5px;top:255px;" width="20" height="20" viewBox="0 0 20 20"><rect x="2.5" y="3.5" width="15" height="12" fill="none" stroke="#e2e2e2" stroke-width="1.5" stroke-dasharray="3.2 2"/></svg><svg style="position:absolute;left:80px;top:269px;" width="4" height="4" viewBox="0 0 4 4"><path d="M4 0 L4 4 L0 4 Z" fill="#9a9a9a"/></svg><svg style="position:absolute;left:60.5px;top:281px;" width="20" height="20" viewBox="0 0 20 20"><ellipse cx="10.5" cy="8" rx="7" ry="5" fill="none" stroke="#e2e2e2" stroke-width="1.3"/><circle cx="5" cy="13.5" r="1.8" fill="none" stroke="#e2e2e2" stroke-width="1.1"/><path d="M5.5 15 L6 18.5" stroke="#e2e2e2" stroke-width="1.1"/></svg><svg style="position:absolute;left:80px;top:295px;" width="4" height="4" viewBox="0 0 4 4"><path d="M4 0 L4 4 L0 4 Z" fill="#9a9a9a"/></svg><svg style="position:absolute;left:60.5px;top:307px;" width="20" height="20" viewBox="0 0 20 20"><path d="M4 17 L12 9" stroke="#e2e2e2" stroke-width="3.2" stroke-linecap="round"/><path d="M12 1.5 L12 5.5 M10 3.5 L14 3.5 M16.5 5 L16.5 8 M15 6.5 L18 6.5 M16 10.5 L16 13.5 M14.5 12 L17.5 12" stroke="#e2e2e2" stroke-width="1.2"/></svg><svg style="position:absolute;left:80px;top:321px;" width="4" height="4" viewBox="0 0 4 4"><path d="M4 0 L4 4 L0 4 Z" fill="#9a9a9a"/></svg><svg style="position:absolute;left:60.5px;top:333px;" width="20" height="20" viewBox="0 0 20 20"><path d="M6 2 L6 14 L18 14 M2 6 L14 6 L14 18" stroke="#e2e2e2" stroke-width="2" fill="none"/></svg><svg style="position:absolute;left:80px;top:347px;" width="4" height="4" viewBox="0 0 4 4"><path d="M4 0 L4 4 L0 4 Z" fill="#9a9a9a"/></svg><svg style="position:absolute;left:60.5px;top:359px;" width="20" height="20" viewBox="0 0 20 20"><rect x="3" y="3" width="14" height="14" fill="none" stroke="#e2e2e2" stroke-width="1.3"/><path d="M3 3 L17 17 M17 3 L3 17" stroke="#e2e2e2" stroke-width="1.1"/></svg><svg style="position:absolute;left:60.5px;top:385px;" width="20" height="20" viewBox="0 0 20 20"><path d="M4 16 L12 8" stroke="#e2e2e2" stroke-width="3.6" stroke-linecap="round"/><path d="M4.2 15.8 L11.5 8.5" stroke="#535353" stroke-width="1.4"/><path d="M11 5 L15 9" stroke="#e2e2e2" stroke-width="2.4"/><path d="M13.5 6.5 L16.5 3.5" stroke="#e2e2e2" stroke-width="3.6" stroke-linecap="round"/></svg><svg style="position:absolute;left:80px;top:399px;" width="4" height="4" viewBox="0 0 4 4"><path d="M4 0 L4 4 L0 4 Z" fill="#9a9a9a"/></svg><svg style="position:absolute;left:60.5px;top:411px;" width="20" height="20" viewBox="0 0 20 20"><path d="M5 15 L14.5 5.5" stroke="#e2e2e2" stroke-width="6.5" stroke-linecap="round"/><rect x="7.5" y="8" width="4.5" height="4.5" transform="rotate(45 9.75 10.25)" fill="#535353"/><circle cx="9.75" cy="10.25" r="0.8" fill="#e2e2e2"/><path d="M3 11 C1.5 6 5 2.5 9 3.5" stroke="#e2e2e2" stroke-width="1" stroke-dasharray="1 1.2" fill="none"/></svg><svg style="position:absolute;left:80px;top:425px;" width="4" height="4" viewBox="0 0 4 4"><path d="M4 0 L4 4 L0 4 Z" fill="#9a9a9a"/></svg><svg style="position:absolute;left:60.5px;top:437px;" width="20" height="20" viewBox="0 0 20 20"><path d="M9.5 10.5 L16.5 3" stroke="#e2e2e2" stroke-width="2.4" stroke-linecap="round"/><path d="M4 17 C3.5 14 5.5 11.5 8.5 11.8 C9.5 14.5 7.5 17 4 17 Z" fill="#e2e2e2"/></svg><svg style="position:absolute;left:80px;top:451px;" width="4" height="4" viewBox="0 0 4 4"><path d="M4 0 L4 4 L0 4 Z" fill="#9a9a9a"/></svg><svg style="position:absolute;left:60.5px;top:463px;" width="20" height="20" viewBox="0 0 20 20"><circle cx="10" cy="5" r="2.8" fill="#e2e2e2"/><path d="M10 7 L10 10.5" stroke="#e2e2e2" stroke-width="2"/><rect x="4" y="10.5" width="12" height="3.5" rx="1" fill="#e2e2e2"/><path d="M4 16 L16 16" stroke="#e2e2e2" stroke-width="1.2"/></svg><svg style="position:absolute;left:80px;top:477px;" width="4" height="4" viewBox="0 0 4 4"><path d="M4 0 L4 4 L0 4 Z" fill="#9a9a9a"/></svg><svg style="position:absolute;left:60.5px;top:489px;" width="20" height="20" viewBox="0 0 20 20"><path d="M9.5 11 L16.5 3.5" stroke="#e2e2e2" stroke-width="2.4" stroke-linecap="round"/><path d="M5 17.5 C4.5 14.5 6.5 12 9.5 12.3 C10.5 15 8.5 17.5 5 17.5 Z" fill="#e2e2e2"/><path d="M11 5 C8 4.5 5.5 5.5 4 8" stroke="#e2e2e2" stroke-width="1.3" fill="none"/><path d="M1.5 7 L5.5 6 L4.5 10 Z" fill="#e2e2e2"/><path d="M14.5 9 L13 14" stroke="#e2e2e2" stroke-width="1" stroke-dasharray="1 1.2"/></svg><svg style="position:absolute;left:80px;top:503px;" width="4" height="4" viewBox="0 0 4 4"><path d="M4 0 L4 4 L0 4 Z" fill="#9a9a9a"/></svg><svg style="position:absolute;left:60.5px;top:515px;" width="20" height="20" viewBox="0 0 20 20"><path d="M3.5 13.5 L10.5 6.5 L14 10 L7 17 L5 17 Z" fill="none" stroke="#e2e2e2" stroke-width="1.2"/><path d="M9 8 L13.5 3.5 L17 7 L12.5 11.5 Z" fill="#e2e2e2"/><path d="M7 17.5 L16.5 17.5" stroke="#e2e2e2" stroke-width="1"/></svg><svg style="position:absolute;left:80px;top:529px;" width="4" height="4" viewBox="0 0 4 4"><path d="M4 0 L4 4 L0 4 Z" fill="#9a9a9a"/></svg><svg style="position:absolute;left:60.5px;top:541px;" width="20" height="20" viewBox="0 0 20 20"><path d="M2.6 11.3 L10.8 3.4 L16.8 9.4 L8.9 17.3 Z" fill="none" stroke="#e2e2e2" stroke-width="1.5" stroke-linejoin="round"/><path d="M7 8.5 L5.6 4 C5.4 2.6 7.2 2 8 3.2 L9.8 7.5" stroke="#e2e2e2" stroke-width="1.3" fill="none"/><circle cx="18" cy="14.3" r="2" fill="#e2e2e2"/></svg><svg style="position:absolute;left:80px;top:555px;" width="4" height="4" viewBox="0 0 4 4"><path d="M4 0 L4 4 L0 4 Z" fill="#9a9a9a"/></svg><svg style="position:absolute;left:60.5px;top:567px;" width="20" height="20" viewBox="0 0 20 20"><path d="M10 3 C7.5 7 5.5 9.5 5.5 12.5 C5.5 15.5 7.5 17.5 10 17.5 C12.5 17.5 14.5 15.5 14.5 12.5 C14.5 9.5 12.5 7 10 3 Z" fill="#e2e2e2"/></svg><svg style="position:absolute;left:80px;top:581px;" width="4" height="4" viewBox="0 0 4 4"><path d="M4 0 L4 4 L0 4 Z" fill="#9a9a9a"/></svg><svg style="position:absolute;left:60.5px;top:593px;" width="20" height="20" viewBox="0 0 20 20"><circle cx="12" cy="7" r="5" fill="#e2e2e2"/><path d="M8.5 10.5 L3 16.5" stroke="#e2e2e2" stroke-width="1.8" stroke-linecap="round"/></svg><svg style="position:absolute;left:80px;top:607px;" width="4" height="4" viewBox="0 0 4 4"><path d="M4 0 L4 4 L0 4 Z" fill="#9a9a9a"/></svg><svg style="position:absolute;left:60.5px;top:619px;" width="20" height="20" viewBox="0 0 20 20"><path d="M4 17 L6 9 L11 5 L15 9 L11 14 Z" fill="none" stroke="#e2e2e2" stroke-width="1.3"/><path d="M11.5 4 L13.5 2 L18 6.5 L16 8.5" stroke="#e2e2e2" stroke-width="1.6" fill="none"/><path d="M4.5 16.5 L9 12" stroke="#e2e2e2" stroke-width="1"/><circle cx="9.5" cy="11.5" r="1.2" fill="#e2e2e2"/></svg><svg style="position:absolute;left:80px;top:633px;" width="4" height="4" viewBox="0 0 4 4"><path d="M4 0 L4 4 L0 4 Z" fill="#9a9a9a"/></svg><svg style="position:absolute;left:60.5px;top:645px;" width="20" height="20" viewBox="0 0 20 20"><path d="M3.5 6.5 L3.5 3.5 L16.5 3.5 L16.5 6.5 M10 3.5 L10 16.5 M7 16.5 L13 16.5" stroke="#e2e2e2" stroke-width="2.3" fill="none"/></svg><svg style="position:absolute;left:60.5px;top:671px;" width="20" height="20" viewBox="0 0 20 20"><path d="M5 2.5 L5 16 L8.3 13 L11 18 L13 17 L10.5 12 L15 12 Z" fill="#1e1e1e" stroke="#e2e2e2" stroke-width="1.3" stroke-linejoin="round"/></svg><svg style="position:absolute;left:80px;top:685px;" width="4" height="4" viewBox="0 0 4 4"><path d="M4 0 L4 4 L0 4 Z" fill="#9a9a9a"/></svg><svg style="position:absolute;left:60.5px;top:697px;" width="20" height="20" viewBox="0 0 20 20"><rect x="2.5" y="3.5" width="15" height="12" fill="#6c6c6c" stroke="#e2e2e2" stroke-width="1.5"/></svg><svg style="position:absolute;left:80px;top:711px;" width="4" height="4" viewBox="0 0 4 4"><path d="M4 0 L4 4 L0 4 Z" fill="#9a9a9a"/></svg><svg style="position:absolute;left:60.5px;top:723px;" width="20" height="20" viewBox="0 0 20 20"><path d="M7.7 5 L7.7 11 M11.1 3 L11.1 11 M14.3 4 L14.3 11 M17.6 7.5 L16.8 12" stroke="#e2e2e2" stroke-width="2.5" stroke-linecap="round"/><path d="M3 9.8 L7 13.5" stroke="#e2e2e2" stroke-width="2.8" stroke-linecap="round"/><path d="M6.3 9.5 L17.6 9.5 L16.8 15 Q14.5 18 10.8 18 Q8 18 6 14.5 Z" fill="#e2e2e2"/></svg><svg style="position:absolute;left:80px;top:737px;" width="4" height="4" viewBox="0 0 4 4"><path d="M4 0 L4 4 L0 4 Z" fill="#9a9a9a"/></svg><svg style="position:absolute;left:60.5px;top:749px;" width="20" height="20" viewBox="0 0 20 20"><circle cx="8.5" cy="8" r="5.3" fill="none" stroke="#e2e2e2" stroke-width="1.5"/><path d="M12.5 12 L17 16.5" stroke="#e2e2e2" stroke-width="2.2" stroke-linecap="round"/></svg><svg style="position:absolute;left:80px;top:763px;" width="4" height="4" viewBox="0 0 4 4"><path d="M4 0 L4 4 L0 4 Z" fill="#9a9a9a"/></svg><svg style="position:absolute;left:60.5px;top:775px;" width="20" height="20" viewBox="0 0 20 20"><circle cx="4" cy="10" r="2" fill="#e2e2e2"/><circle cx="10" cy="10" r="2" fill="#e2e2e2"/><circle cx="16" cy="10" r="2" fill="#e2e2e2"/></svg><svg style="position:absolute;left:80px;top:789px;" width="4" height="4" viewBox="0 0 4 4"><path d="M4 0 L4 4 L0 4 Z" fill="#9a9a9a"/></svg><div style="position:absolute;left:60px;top:807px;width:7px;height:7px;background:#e8e8e8;"></div><div style="position:absolute;left:56px;top:803px;width:7px;height:7px;background:#000000;box-sizing:border-box;border:1px solid #e8e8e8;"></div><svg style="position:absolute;left:72px;top:803px;" width="12" height="12" viewBox="0 0 12 12"><path d="M2 4 L9 4 L9 10" stroke="#e2e2e2" stroke-width="1.2" fill="none"/><path d="M0.5 4 L3.5 1.5 L3.5 6.5 Z M9 11.5 L6.5 8.5 L11.5 8.5 Z" fill="#e2e2e2"/></svg><div style="position:absolute;left:65.5px;top:830px;width:19px;height:18px;background:#f4000c;box-sizing:border-box;border:1px solid #f4f4f4;"></div><div style="position:absolute;left:56px;top:820px;width:18.5px;height:18px;background:#f4000c;box-sizing:border-box;border:1px solid #f4f4f4;"></div><svg style="position:absolute;left:61px;top:859px;" width="19" height="16" viewBox="0 0 19 16"><rect x="1.5" y="1.5" width="16" height="12.5" fill="none" stroke="#e2e2e2" stroke-width="1.4"/><circle cx="9.5" cy="7.75" r="4" fill="none" stroke="#e2e2e2" stroke-width="1.1" stroke-dasharray="1 1"/></svg><svg style="position:absolute;left:61px;top:885px;" width="20" height="16" viewBox="0 0 20 16"><rect x="6" y="1" width="12" height="9" fill="#535353" stroke="#e2e2e2" stroke-width="1.3"/><rect x="1.5" y="5" width="12" height="9" fill="none" stroke="#e2e2e2" stroke-width="1.3"/><rect x="6" y="1" width="12" height="9" fill="none" stroke="#e2e2e2" stroke-width="1.3"/></svg><svg style="position:absolute;left:80px;top:895px;" width="4" height="4" viewBox="0 0 4 4"><path d="M4 0 L4 4 L0 4 Z" fill="#9a9a9a"/></svg><div style="position:absolute;left:1101px;top:94px;width:16px;height:861px;background:#4e4e4e;"></div><svg style="position:absolute;left:1105px;top:101px;" width="9" height="6" viewBox="0 0 9 6"><path d="M1 5 L4.5 1.5 L8 5" stroke="#7a7a7a" stroke-width="1.2" fill="none"/></svg><svg style="position:absolute;left:1105px;top:942px;" width="9" height="6" viewBox="0 0 9 6"><path d="M1 1 L4.5 4.5 L8 1" stroke="#7a7a7a" stroke-width="1.2" fill="none"/></svg><div style="position:absolute;left:1117px;top:64px;width:3px;height:908px;background:#363636;"></div><div style="position:absolute;left:1120px;top:64px;width:276px;height:13px;background:#3d3d3d;"></div><div style="position:absolute;left:1207px;top:73px;width:172px;height:1px;background:#474747;"></div><svg style="position:absolute;left:1143px;top:68px;" width="9" height="6" viewBox="0 0 9 6"><path d="M4 0.5 L1 3 L4 5.5 Z M8 0.5 L5 3 L8 5.5 Z" fill="#d0d0d0"/></svg><svg style="position:absolute;left:1382px;top:68px;" width="9" height="6" viewBox="0 0 9 6"><path d="M1 0.5 L4 3 L1 5.5 Z M5 0.5 L8 3 L5 5.5 Z" fill="#d0d0d0"/></svg><div style="position:absolute;left:1120px;top:77px;width:37px;height:895px;background:#535353;"></div><div style="position:absolute;left:1120px;top:77px;width:37px;height:68px;background:#4f4f4f;"></div><div style="position:absolute;left:1120px;top:145px;width:37px;height:2px;background:#3a3a3a;"></div><div style="position:absolute;left:1120px;top:147px;width:37px;height:67px;background:#4f4f4f;"></div><div style="position:absolute;left:1120px;top:213px;width:37px;height:1px;background:#3a3a3a;"></div><div style="position:absolute;left:1130px;top:80px;width:1px;height:5px;background:#454545;"></div><div style="position:absolute;left:1130px;top:149px;width:1px;height:5px;background:#454545;"></div><div style="position:absolute;left:1133px;top:80px;width:1px;height:5px;background:#454545;"></div><div style="position:absolute;left:1133px;top:149px;width:1px;height:5px;background:#454545;"></div><div style="position:absolute;left:1136px;top:80px;width:1px;height:5px;background:#454545;"></div><div style="position:absolute;left:1136px;top:149px;width:1px;height:5px;background:#454545;"></div><div style="position:absolute;left:1139px;top:80px;width:1px;height:5px;background:#454545;"></div><div style="position:absolute;left:1139px;top:149px;width:1px;height:5px;background:#454545;"></div><div style="position:absolute;left:1142px;top:80px;width:1px;height:5px;background:#454545;"></div><div style="position:absolute;left:1142px;top:149px;width:1px;height:5px;background:#454545;"></div><div style="position:absolute;left:1145px;top:80px;width:1px;height:5px;background:#454545;"></div><div style="position:absolute;left:1145px;top:149px;width:1px;height:5px;background:#454545;"></div><svg style="position:absolute;left:1132px;top:91px;" width="17" height="19" viewBox="0 0 17 19"><rect x="1.5" y="1.5" width="4" height="4" fill="none" stroke="#dcdcdc" stroke-width="1"/><rect x="1.5" y="7.5" width="4" height="4" fill="none" stroke="#dcdcdc" stroke-width="1"/><rect x="1" y="13" width="5" height="5" fill="#dcdcdc"/><path d="M9.5 16.5 C13.5 14 15 8 11.5 4.8" stroke="#dcdcdc" stroke-width="1.9" fill="none"/><path d="M8.3 2 L14 3.2 L10.2 7.2 Z" fill="#dcdcdc"/></svg><svg style="position:absolute;left:1133px;top:121px;" width="15" height="16" viewBox="0 0 15 16"><path d="M1.5 1 L14 8 L1.5 15 Z" fill="#e0e0e0"/></svg><svg style="position:absolute;left:1132px;top:161px;" width="17" height="18" viewBox="0 0 17 18"><path d="M1.6 14.2 L7 1.8 L12.4 14.2 M3.6 10 L10.4 10" stroke="#e0e0e0" stroke-width="1.7" fill="none"/><path d="M14.8 0 L14.8 17" stroke="#e0e0e0" stroke-width="1.2"/></svg><svg style="position:absolute;left:1133px;top:189px;" width="14" height="18" viewBox="0 0 14 18"><path d="M8.5 1 L8.5 9.5 C3 9.5 1 7.5 1 5.2 C1 2.5 3.5 1 6.5 1 Z" fill="#e0e0e0"/><path d="M6 1.3 L12.5 1.3 M8.8 1 L8.8 16.5 M11.8 1 L11.8 16.5" stroke="#e0e0e0" stroke-width="1.3" fill="none"/></svg><div style="position:absolute;left:1157px;top:77px;width:3px;height:895px;background:#363636;"></div><div style="position:absolute;left:1160px;top:77px;width:232px;height:27px;background:#424242;"></div><div style="position:absolute;left:1160px;top:77px;width:45px;height:27px;background:#535353;"></div><div style="position:absolute;left:1205px;top:77px;width:63px;height:27px;background:#494949;"></div><div style="position:absolute;left:1268px;top:77px;width:1px;height:27px;background:#3a3a3a;"></div><div style="position:absolute;left:1169px;top:85.78px;font-size:10.3px;line-height:10.3px;color:#f0f0f0;white-space:nowrap;-webkit-text-stroke:0.45px #f0f0f0;">Color</div><div style="position:absolute;left:1213.5px;top:85.78px;font-size:10.3px;line-height:10.3px;color:#ababab;white-space:nowrap;-webkit-text-stroke:0.3px #ababab;">Swatches</div><div style="position:absolute;left:1378px;top:87px;width:11px;height:1px;background:#cfcfcf;"></div><div style="position:absolute;left:1378px;top:89px;width:11px;height:1px;background:#cfcfcf;"></div><div style="position:absolute;left:1378px;top:91px;width:11px;height:1px;background:#cfcfcf;"></div><div style="position:absolute;left:1378px;top:93px;width:11px;height:1px;background:#cfcfcf;"></div><div style="position:absolute;left:1160px;top:104px;width:232px;height:120px;background:#535353;"></div><div style="position:absolute;left:1179px;top:125px;width:20px;height:20px;background:#f4000c;box-sizing:border-box;border:1px solid #f4f4f4;outline:1px solid #2a2a2a;"></div><div style="position:absolute;left:1169px;top:115px;width:21px;height:21px;background:#f4000c;box-sizing:border-box;border:1px solid #f4f4f4;outline:1px solid #2a2a2a;"></div><svg style="position:absolute;left:1168px;top:167px;" width="13" height="13" viewBox="0 0 13 13"><path d="M6.5 0.5 L12.5 12.5 L0.5 12.5 Z" fill="#e6e6e6"/><path d="M6.5 4.5 L6.5 9" stroke="#535353" stroke-width="1.6"/><rect x="5.7" y="10" width="1.6" height="1.6" fill="#535353"/></svg><div style="position:absolute;left:1184px;top:168px;width:13px;height:13px;background:#e84040;box-sizing:border-box;border:1px solid #f0f0f0;"></div><div style="position:absolute;left:1205px;top:112px;width:138px;height:91px;background:;background:linear-gradient(to bottom,rgba(0,0,0,0) 0%,rgba(0,0,0,0.06) 20%,rgba(0,0,0,0.18) 40%,rgba(0,0,0,0.3) 55%,rgba(0,0,0,0.55) 70%,rgba(0,0,0,0.85) 85%,#000 97%),linear-gradient(to right,#fff 0%,#ffc4ca 20%,#ff7a88 42%,#ff3a4c 62%,#ff0a1e 85%,#ff0010 100%);"></div><svg style="position:absolute;left:1329px;top:111px;" width="12" height="12" viewBox="0 0 12 12"><circle cx="6" cy="6" r="4.8" stroke="#5a0008" stroke-width="1.1" fill="none"/></svg><div style="position:absolute;left:1360px;top:112px;width:19px;height:91px;background:;background:linear-gradient(to bottom,#ff0010 0%,#ff0090 8%,#f0f 20%,#6000ff 28%,#00f 34%,#00a0ff 44%,#0ff 52%,#00ff40 62%,#0f0 72%,#60ff00 80%,#ff0 84%,#ff8000 92%,#ff2000 100%);"></div><svg style="position:absolute;left:1349px;top:107px;" width="9" height="11" viewBox="0 0 9 11"><path d="M1 1 L8 5.5 L1 10 Z" fill="#f0f0f0"/></svg><div style="position:absolute;left:1160px;top:224px;width:232px;height:2px;background:#3a3a3a;"></div><div style="position:absolute;left:1160px;top:226px;width:232px;height:29px;background:#424242;"></div><div style="position:absolute;left:1160px;top:226px;width:67px;height:29px;background:#494949;"></div><div style="position:absolute;left:1227px;top:226px;width:79px;height:29px;background:#535353;"></div><div style="position:absolute;left:1306px;top:226px;width:47px;height:29px;background:#494949;"></div><div style="position:absolute;left:1353px;top:226px;width:1px;height:29px;background:#3a3a3a;"></div><div style="position:absolute;left:1169px;top:235.78px;font-size:10.3px;line-height:10.3px;color:#ababab;white-space:nowrap;-webkit-text-stroke:0.3px #ababab;">Properties</div><div style="position:absolute;left:1237px;top:235.70px;font-size:10.4px;line-height:10.4px;color:#f0f0f0;white-space:nowrap;-webkit-text-stroke:0.45px #f0f0f0;">Adjustments</div><div style="position:absolute;left:1315px;top:235.78px;font-size:10.3px;line-height:10.3px;color:#ababab;white-space:nowrap;-webkit-text-stroke:0.3px #ababab;">Styles</div><div style="position:absolute;left:1378px;top:237px;width:11px;height:1px;background:#cfcfcf;"></div><div style="position:absolute;left:1378px;top:239px;width:11px;height:1px;background:#cfcfcf;"></div><div style="position:absolute;left:1378px;top:241px;width:11px;height:1px;background:#cfcfcf;"></div><div style="position:absolute;left:1378px;top:243px;width:11px;height:1px;background:#cfcfcf;"></div><div style="position:absolute;left:1160px;top:255px;width:232px;height:217px;background:#535353;"></div><div style="position:absolute;left:1169px;top:261.04px;font-size:10px;line-height:10px;color:#e0e0e0;white-space:nowrap;">Add an adjustment</div><svg style="position:absolute;left:1205px;top:275px;" width="19" height="19" viewBox="0 0 19 19"><circle cx="9.5" cy="9.5" r="5" fill="none" stroke="#e4e4e4" stroke-width="1.3"/><path d="M9.5 4.5 A5 5 0 0 1 9.5 14.5 Z" fill="#e4e4e4"/><circle cx="17.50" cy="9.50" r="1" fill="#e4e4e4"/><circle cx="15.16" cy="15.16" r="1" fill="#e4e4e4"/><circle cx="9.50" cy="17.50" r="1" fill="#e4e4e4"/><circle cx="3.84" cy="15.16" r="1" fill="#e4e4e4"/><circle cx="1.50" cy="9.50" r="1" fill="#e4e4e4"/><circle cx="3.84" cy="3.84" r="1" fill="#e4e4e4"/><circle cx="9.50" cy="1.50" r="1" fill="#e4e4e4"/><circle cx="15.16" cy="3.84" r="1" fill="#e4e4e4"/></svg><svg style="position:absolute;left:1229px;top:277px;" width="20" height="14" viewBox="0 0 20 14"><path d="M1 13 L1 7 L2.5 5 L3.5 8 L5 3 L6 7 L7.5 1 L9 6 L10.5 2 L12 7 L13.5 4 L15 8 L16.5 5 L18 8 L19 7 L19 13 Z" fill="#e4e4e4"/></svg><svg style="position:absolute;left:1254px;top:277px;" width="18" height="15" viewBox="0 0 18 15"><rect x="1" y="1" width="16" height="13" fill="none" stroke="#e4e4e4" stroke-width="1.1"/><path d="M6.3 1 L6.3 14 M11.6 1 L11.6 14 M1 5.3 L17 5.3 M1 9.6 L17 9.6" stroke="#a8a8a8" stroke-width="1"/><path d="M2 13 C8 13 10 2 16 2" stroke="#e4e4e4" stroke-width="1.3" fill="none"/></svg><svg style="position:absolute;left:1278px;top:278px;" width="18" height="15" viewBox="0 0 18 15"><rect x="1" y="1" width="16" height="13" fill="#e4e4e4"/><path d="M17 1 L17 14 L1 14 Z" fill="#484848"/><rect x="1" y="1" width="16" height="13" fill="none" stroke="#e4e4e4" stroke-width="1.2"/><path d="M3 5 L8 5 M5.5 2.5 L5.5 7.5" stroke="#333" stroke-width="1.3"/><path d="M10.5 10.5 L15 10.5" stroke="#e4e4e4" stroke-width="1.3"/></svg><svg style="position:absolute;left:1302px;top:278px;" width="17" height="15" viewBox="0 0 17 15"><defs><radialGradient id="vg"><stop offset="0" stop-color="#3a3a3a"/><stop offset="1" stop-color="#8a8a8a"/></radialGradient></defs><path d="M1 1.5 L16 1.5 L8.5 14 Z" fill="url(#vg)" stroke="#e4e4e4" stroke-width="1.4" stroke-linejoin="round"/></svg><svg style="position:absolute;left:1194px;top:304px;" width="18" height="15" viewBox="0 0 18 15"><defs><linearGradient id="hg"><stop offset="0" stop-color="#222"/><stop offset="1" stop-color="#ddd"/></linearGradient></defs><rect x="1" y="7.5" width="16" height="6.5" fill="url(#hg)"/><rect x="1" y="1" width="16" height="6.5" fill="#777"/><path d="M3 1 L3 7 M7 1 L7 7 M11 1 L11 7 M15 1 L15 7" stroke="#222" stroke-width="1.4"/><path d="M5 1 L5 7 M9 1 L9 7 M13 1 L13 7" stroke="#ccc" stroke-width="1.2"/><rect x="1" y="1" width="16" height="13" fill="none" stroke="#e4e4e4" stroke-width="1.2"/></svg><svg style="position:absolute;left:1217px;top:303px;" width="20" height="17" viewBox="0 0 20 17"><path d="M2 4 L18 4 M10 2 L10 4" stroke="#e4e4e4" stroke-width="1.2"/><circle cx="10" cy="3" r="1.8" fill="#535353" stroke="#e4e4e4" stroke-width="1.1"/><path d="M4.5 4 L1.5 11 M4.5 4 L7.5 11 M15.5 4 L12.5 11 M15.5 4 L18.5 11" stroke="#e4e4e4" stroke-width="1"/><path d="M1 11 L8 11 A3.5 4 0 0 1 1 11 Z M12 11 L19 11 A3.5 4 0 0 1 12 11 Z" fill="#e4e4e4"/></svg><svg style="position:absolute;left:1242px;top:304px;" width="18" height="15" viewBox="0 0 18 15"><rect x="1" y="1" width="16" height="13" fill="#e4e4e4"/><rect x="2" y="2" width="6.5" height="11" fill="#4a4a4a"/><rect x="1" y="1" width="16" height="13" fill="none" stroke="#e4e4e4" stroke-width="1.2"/></svg><svg style="position:absolute;left:1265px;top:303px;" width="20" height="18" viewBox="0 0 20 18"><path d="M1 5 L5 5 L6.5 3 L10.5 3 L12 5 L15 5 L15 13 L1 13 Z" fill="#e4e4e4"/><circle cx="8" cy="9" r="2.6" fill="#535353" stroke="#e4e4e4" stroke-width="0.8"/><circle cx="15" cy="13.5" r="3.6" fill="#535353" stroke="#e4e4e4" stroke-width="1.4"/></svg><svg style="position:absolute;left:1289px;top:303px;" width="19" height="18" viewBox="0 0 19 18"><circle cx="9.5" cy="6" r="5" fill="#8a8a8a"/><circle cx="6" cy="11.5" r="5" fill="#d0d0d0" opacity="0.9"/><circle cx="13" cy="11.5" r="5" fill="#aaaaaa" opacity="0.9"/><path d="M9.5 8 L8 13 L11 13 Z" fill="#444"/></svg><svg style="position:absolute;left:1314px;top:304px;" width="18" height="15" viewBox="0 0 18 15"><rect x="1" y="1" width="16" height="13" fill="#e4e4e4"/><rect x="2.2" y="2.2" width="4" height="3" fill="#8a8a8a"/><rect x="2.2" y="6.3" width="4" height="3" fill="#5a5a5a"/><rect x="2.2" y="10.4" width="4" height="3" fill="#3e3e3e"/><rect x="7.4" y="2.2" width="4" height="3" fill="#8a8a8a"/><rect x="7.4" y="6.3" width="4" height="3" fill="#5a5a5a"/><rect x="7.4" y="10.4" width="4" height="3" fill="#3e3e3e"/><rect x="12.6" y="2.2" width="4" height="3" fill="#8a8a8a"/><rect x="12.6" y="6.3" width="4" height="3" fill="#5a5a5a"/><rect x="12.6" y="10.4" width="4" height="3" fill="#3e3e3e"/></svg><svg style="position:absolute;left:1206px;top:331px;" width="18" height="15" viewBox="0 0 18 15"><rect x="1" y="1" width="16" height="13" fill="#e4e4e4"/><path d="M1 14 L17 1 L17 14 Z" fill="#cfcfcf"/><ellipse cx="9" cy="7.5" rx="3.2" ry="5.5" transform="rotate(40 9 7.5)" fill="#555"/><rect x="1" y="1" width="16" height="13" fill="none" stroke="#e4e4e4" stroke-width="1.2"/></svg><svg style="position:absolute;left:1230px;top:331px;" width="18" height="15" viewBox="0 0 18 15"><rect x="1" y="1" width="16" height="13" fill="#6a6a6a"/><path d="M1 6 L6 1 M1 10 L10 1 M3 14 L16 1 M7 14 L17 4 M11 14 L17 8" stroke="#bdbdbd" stroke-width="2"/><rect x="1" y="1" width="16" height="13" fill="none" stroke="#e4e4e4" stroke-width="1.2"/></svg><svg style="position:absolute;left:1254px;top:331px;" width="18" height="15" viewBox="0 0 18 15"><rect x="1" y="1" width="16" height="13" fill="#e4e4e4"/><path d="M1.5 10 L5 8 L7 9 L10 5 L13 5 L16 2.5 L16.5 5 L13.5 8 L11 8 L8 11.5 L5 11 L1.5 13 Z" fill="#2a2a2a"/><path d="M9 14 L17 12 L17 14 Z" fill="#2a2a2a"/><rect x="1" y="1" width="16" height="13" fill="none" stroke="#e4e4e4" stroke-width="1.2"/></svg><svg style="position:absolute;left:1278px;top:331px;" width="18" height="15" viewBox="0 0 18 15"><rect x="1" y="1" width="16" height="13" fill="#8a8a8a"/><path d="M1 1 L9 7.5 L17 1 Z" fill="#c8c8c8"/><path d="M1 14 L9 7.5 L17 14 Z" fill="#6e6e6e"/><path d="M1 1 L1 14 L9 7.5 Z" fill="#5a5a5a"/><rect x="1" y="1" width="16" height="13" fill="none" stroke="#e4e4e4" stroke-width="1.2"/></svg><svg style="position:absolute;left:1302px;top:331px;" width="18" height="15" viewBox="0 0 18 15"><defs><linearGradient id="gm"><stop offset="0" stop-color="#111"/><stop offset="1" stop-color="#eee"/></linearGradient></defs><rect x="1" y="1" width="16" height="13" fill="url(#gm)" stroke="#e4e4e4" stroke-width="1.2"/></svg><div style="position:absolute;left:1160px;top:472px;width:232px;height:3px;background:#3a3a3a;"></div><div style="position:absolute;left:1160px;top:475px;width:232px;height:28px;background:#424242;"></div><div style="position:absolute;left:1160px;top:475px;width:58px;height:28px;background:#494949;"></div><div style="position:absolute;left:1218px;top:475px;width:50px;height:28px;background:#494949;"></div><div style="position:absolute;left:1268px;top:475px;width:48px;height:28px;background:#535353;"></div><div style="position:absolute;left:1217px;top:475px;width:1px;height:28px;background:#3a3a3a;"></div><div style="position:absolute;left:1316px;top:475px;width:1px;height:28px;background:#3a3a3a;"></div><div style="position:absolute;left:1168.5px;top:483.84px;font-size:10px;line-height:10px;color:#b4b4b4;white-space:nowrap;-webkit-text-stroke:0.35px #b4b4b4;">Channels</div><div style="position:absolute;left:1231px;top:483.84px;font-size:10px;line-height:10px;color:#b4b4b4;white-space:nowrap;-webkit-text-stroke:0.35px #b4b4b4;">Paths</div><div style="position:absolute;left:1277px;top:483.84px;font-size:10px;line-height:10px;color:#f4f4f4;white-space:nowrap;-webkit-text-stroke:0.4px #f4f4f4;">Layers</div><div style="position:absolute;left:1378px;top:486px;width:11px;height:1px;background:#cfcfcf;"></div><div style="position:absolute;left:1378px;top:488px;width:11px;height:1px;background:#cfcfcf;"></div><div style="position:absolute;left:1378px;top:490px;width:11px;height:1px;background:#cfcfcf;"></div><div style="position:absolute;left:1378px;top:492px;width:11px;height:1px;background:#cfcfcf;"></div><div style="position:absolute;left:1160px;top:503px;width:232px;height:444px;background:#535353;"></div><div style="position:absolute;left:1160px;top:534px;width:232px;height:1px;background:#464646;"></div><div style="position:absolute;left:1160px;top:563px;width:232px;height:1px;background:#464646;"></div><div style="position:absolute;left:1160px;top:590px;width:232px;height:1px;background:#464646;"></div><svg style="position:absolute;left:1312px;top:513px;" width="11" height="15" viewBox="0 0 11 15"><path d="M1 1.5 L10 1.5 M5.5 1.5 L5.5 13.5 M3.5 13.5 L7.5 13.5 M1 1 L1 4 M10 1 L10 4" stroke="#d8d8d8" stroke-width="2" fill="none"/></svg><svg style="position:absolute;left:1334px;top:513px;" width="13" height="13" viewBox="0 0 13 13"><rect x="2" y="2" width="9" height="9" fill="none" stroke="#d8d8d8" stroke-width="1.2"/><circle cx="2" cy="2" r="1.5" fill="#535353" stroke="#d8d8d8"/><circle cx="11" cy="2" r="1.5" fill="#535353" stroke="#d8d8d8"/><circle cx="2" cy="11" r="1.5" fill="#535353" stroke="#d8d8d8"/><circle cx="11" cy="11" r="1.5" fill="#535353" stroke="#d8d8d8"/></svg><svg style="position:absolute;left:1359px;top:513px;" width="12" height="15" viewBox="0 0 12 15"><path d="M3 1 L8 1 L11 4 L11 14 L3 14 Z" fill="none" stroke="#d8d8d8" stroke-width="1.2"/><rect x="0.5" y="8" width="6" height="6" fill="#d8d8d8"/></svg><div style="position:absolute;left:1382px;top:512px;width:8px;height:18px;background:#3c3c3c;border-radius:4px;"></div><div style="position:absolute;left:1382px;top:512px;width:8px;height:8px;background:#e6e6e6;border-radius:4px;"></div><div style="position:absolute;left:1313px;top:544.53px;font-size:10px;line-height:10px;color:#d0d0d0;white-space:nowrap;">acity:</div><div style="position:absolute;left:1340px;top:541px;width:35px;height:15px;background:#3d3d3d;border-radius:2px;"></div><div style="position:absolute;left:1344px;top:544.53px;font-size:10px;line-height:10px;color:#e8e8e8;white-space:nowrap;">100%</div><div style="position:absolute;left:1376px;top:541px;width:14px;height:15px;background:#3d3d3d;border-radius:2px;"></div><svg style="position:absolute;left:1379px;top:546px;" width="9" height="6" viewBox="0 0 9 6"><path d="M1 1 L4.5 4.5 L8 1" stroke="#bcbcbc" stroke-width="1.2" fill="none"/></svg><div style="position:absolute;left:1320px;top:572.53px;font-size:10px;line-height:10px;color:#d0d0d0;white-space:nowrap;">Fill:</div><div style="position:absolute;left:1340px;top:569px;width:35px;height:15px;background:#3d3d3d;border-radius:2px;"></div><div style="position:absolute;left:1344px;top:572.53px;font-size:10px;line-height:10px;color:#e8e8e8;white-space:nowrap;">100%</div><div style="position:absolute;left:1376px;top:569px;width:14px;height:15px;background:#3d3d3d;border-radius:2px;"></div><svg style="position:absolute;left:1379px;top:574px;" width="9" height="6" viewBox="0 0 9 6"><path d="M1 1 L4.5 4.5 L8 1" stroke="#bcbcbc" stroke-width="1.2" fill="none"/></svg><div style="position:absolute;left:1160px;top:593px;width:219px;height:39px;background:#6a6a6a;"></div><div style="position:absolute;left:1160px;top:632px;width:219px;height:1px;background:#3f3f3f;"></div><div style="position:absolute;left:1160px;top:633px;width:219px;height:40px;background:#4f4f4f;"></div><div style="position:absolute;left:1160px;top:673px;width:219px;height:1px;background:#3f3f3f;"></div><div style="position:absolute;left:1160px;top:674px;width:219px;height:39px;background:#4f4f4f;"></div><div style="position:absolute;left:1160px;top:713px;width:219px;height:1px;background:#3f3f3f;"></div><svg style="position:absolute;left:1352px;top:689px;" width="12" height="14" viewBox="0 0 12 14"><path d="M3 6 L3 4 C3 0.8 9 0.8 9 4 L9 6" stroke="#d8d8d8" stroke-width="1.3" fill="none"/><rect x="1" y="6" width="10" height="7.5" fill="none" stroke="#d8d8d8" stroke-width="1.3"/><rect x="5.3" y="8.5" width="1.5" height="2.5" fill="#d8d8d8"/></svg><div style="position:absolute;left:1160px;top:714px;width:219px;height:233px;background:#4d4d4d;"></div><div style="position:absolute;left:1379px;top:591px;width:13px;height:356px;background:#4a4a4a;"></div><div style="position:absolute;left:1160px;top:947px;width:232px;height:25px;background:#535353;"></div><div style="position:absolute;left:1160px;top:946px;width:232px;height:1px;background:#454545;"></div><svg style="position:absolute;left:1329px;top:953px;" width="12" height="14" viewBox="0 0 12 14"><path d="M4 1 L11 1 L11 12 L1 12 L1 4 Z M1 4 L4 4 L4 1" fill="none" stroke="#d8d8d8" stroke-width="1.2"/></svg><svg style="position:absolute;left:1355px;top:952px;" width="12" height="15" viewBox="0 0 12 15"><path d="M1 3 L11 3 M4 3 L4 1 L8 1 L8 3 M2 4 L2.8 14 L9.2 14 L10 4 M4.5 6 L4.5 12 M6 6 L6 12 M7.5 6 L7.5 12" stroke="#d8d8d8" stroke-width="1.1" fill="none"/></svg><div style="position:absolute;left:1392px;top:64px;width:4px;height:908px;background:#4a4a4a;"></div><div style="position:absolute;left:1160px;top:503px;width:3px;height:470px;background:#444444;"></div><div style="position:absolute;left:1163px;top:506px;width:151px;height:470px;background:#1f64a6;"></div><div style="position:absolute;left:1313.5px;top:506px;width:1px;height:470px;background:#3e5a74;"></div><div style="position:absolute;left:1165px;top:508px;width:148.5px;height:470px;background:#ffffff;"></div><div style="position:absolute;left:1166.5px;top:511.04px;font-size:10px;line-height:10px;color:#000000;white-space:nowrap;">Normal</div><div style="position:absolute;left:1166.5px;top:526.03px;font-size:10px;line-height:10px;color:#000000;white-space:nowrap;">Dissolve</div><div style="position:absolute;left:1165px;top:545px;width:148.5px;height:1px;background:#a8a8a8;"></div><div style="position:absolute;left:1166.5px;top:556.03px;font-size:10px;line-height:10px;color:#000000;white-space:nowrap;">Darken</div><div style="position:absolute;left:1166.5px;top:571.03px;font-size:10px;line-height:10px;color:#000000;white-space:nowrap;">Multiply</div><div style="position:absolute;left:1166.5px;top:586.03px;font-size:10px;line-height:10px;color:#000000;white-space:nowrap;">Color Burn</div><div style="position:absolute;left:1166.5px;top:601.03px;font-size:10px;line-height:10px;color:#000000;white-space:nowrap;">Linear Burn</div><div style="position:absolute;left:1166.5px;top:616.03px;font-size:10px;line-height:10px;color:#000000;white-space:nowrap;">Darker Color</div><div style="position:absolute;left:1165px;top:635px;width:148.5px;height:1px;background:#a8a8a8;"></div><div style="position:absolute;left:1166.5px;top:646.03px;font-size:10px;line-height:10px;color:#000000;white-space:nowrap;">Lighten</div><div style="position:absolute;left:1166.5px;top:661.03px;font-size:10px;line-height:10px;color:#000000;white-space:nowrap;">Screen</div><div style="position:absolute;left:1165px;top:673px;width:148.5px;height:15px;background:#0a72d8;box-sizing:border-box;border:1px dotted #12335a;"></div><div style="position:absolute;left:1166.5px;top:676.03px;font-size:10px;line-height:10px;color:#ffffff;white-space:nowrap;">Color Dodge</div><div style="position:absolute;left:1166.5px;top:691.03px;font-size:10px;line-height:10px;color:#000000;white-space:nowrap;">Linear Dodge (Add)</div><div style="position:absolute;left:1166.5px;top:706.03px;font-size:10px;line-height:10px;color:#000000;white-space:nowrap;">Lighter Color</div><div style="position:absolute;left:1165px;top:725px;width:148.5px;height:1px;background:#a8a8a8;"></div><div style="position:absolute;left:1166.5px;top:736.03px;font-size:10px;line-height:10px;color:#000000;white-space:nowrap;">Overlay</div><div style="position:absolute;left:1166.5px;top:751.03px;font-size:10px;line-height:10px;color:#000000;white-space:nowrap;">Soft Light</div><div style="position:absolute;left:1166.5px;top:766.03px;font-size:10px;line-height:10px;color:#000000;white-space:nowrap;">Hard Light</div><div style="position:absolute;left:1166.5px;top:781.03px;font-size:10px;line-height:10px;color:#000000;white-space:nowrap;">Vivid Light</div><div style="position:absolute;left:1166.5px;top:796.03px;font-size:10px;line-height:10px;color:#000000;white-space:nowrap;">Linear Light</div><div style="position:absolute;left:1166.5px;top:811.03px;font-size:10px;line-height:10px;color:#000000;white-space:nowrap;">Pin Light</div><div style="position:absolute;left:1166.5px;top:826.03px;font-size:10px;line-height:10px;color:#000000;white-space:nowrap;">Hard Mix</div><div style="position:absolute;left:1165px;top:845px;width:148.5px;height:1px;background:#a8a8a8;"></div><div style="position:absolute;left:1166.5px;top:856.03px;font-size:10px;line-height:10px;color:#000000;white-space:nowrap;">Difference</div><div style="position:absolute;left:1166.5px;top:871.03px;font-size:10px;line-height:10px;color:#000000;white-space:nowrap;">Exclusion</div><div style="position:absolute;left:1166.5px;top:886.03px;font-size:10px;line-height:10px;color:#000000;white-space:nowrap;">Subtract</div><div style="position:absolute;left:1166.5px;top:901.03px;font-size:10px;line-height:10px;color:#000000;white-space:nowrap;">Divide</div><div style="position:absolute;left:1165px;top:920px;width:148.5px;height:1px;background:#a8a8a8;"></div><div style="position:absolute;left:1166.5px;top:931.03px;font-size:10px;line-height:10px;color:#000000;white-space:nowrap;">Hue</div><div style="position:absolute;left:1166.5px;top:946.03px;font-size:10px;line-height:10px;color:#000000;white-space:nowrap;">Saturation</div><div style="position:absolute;left:1166.5px;top:961.03px;font-size:10px;line-height:10px;color:#000000;white-space:nowrap;">Color</div><div style="position:absolute;left:712px;top:200px;width:423px;height:679px;box-sizing:border-box;border:7px solid #fa0a1c;overflow:hidden;border-radius:1px;"><div style="position:absolute;left:-1805.48px;top:-729.81px;width:1396px;height:972px;transform:scale(1.64333);transform-origin:0 0;"><div style="position:absolute;left:900px;top:94px;width:201px;height:878px;background:#232323;"></div><div style="position:absolute;left:1101px;top:94px;width:16.6px;height:861.6px;background:#4e4e4e;"></div><svg style="position:absolute;left:1105px;top:101px;" width="9" height="6" viewBox="0 0 9 6"><path d="M1 5 L4.5 1.5 L8 5" stroke="#7a7a7a" stroke-width="1.2" fill="none"/></svg><svg style="position:absolute;left:1105px;top:942px;" width="9" height="6" viewBox="0 0 9 6"><path d="M1 1 L4.5 4.5 L8 1" stroke="#7a7a7a" stroke-width="1.2" fill="none"/></svg><div style="position:absolute;left:1101px;top:94px;width:16.6px;height:861.6px;background:#3e3e3e;"></div><div style="position:absolute;left:1103.6px;top:111px;width:13.0px;height:556.6px;background:#6a6a6a;"></div><div style="position:absolute;left:1117px;top:64px;width:3.6px;height:908.6px;background:#363636;"></div><div style="position:absolute;left:1120px;top:64px;width:276.6px;height:13.6px;background:#3d3d3d;"></div><div style="position:absolute;left:1207px;top:73px;width:172.6px;height:1px;background:#474747;"></div><svg style="position:absolute;left:1143px;top:68px;" width="9" height="6" viewBox="0 0 9 6"><path d="M4 0.5 L1 3 L4 5.5 Z M8 0.5 L5 3 L8 5.5 Z" fill="#d0d0d0"/></svg><svg style="position:absolute;left:1382px;top:68px;" width="9" height="6" viewBox="0 0 9 6"><path d="M1 0.5 L4 3 L1 5.5 Z M5 0.5 L8 3 L5 5.5 Z" fill="#d0d0d0"/></svg><div style="position:absolute;left:1120px;top:77px;width:37.6px;height:895.6px;background:#535353;"></div><div style="position:absolute;left:1120px;top:77px;width:37.6px;height:68.6px;background:#4f4f4f;"></div><div style="position:absolute;left:1120px;top:145px;width:37.6px;height:2px;background:#3a3a3a;"></div><div style="position:absolute;left:1120px;top:147px;width:37.6px;height:67.6px;background:#4f4f4f;"></div><div style="position:absolute;left:1120px;top:213px;width:37.6px;height:1px;background:#3a3a3a;"></div><div style="position:absolute;left:1130px;top:80px;width:1px;height:5.6px;background:#454545;"></div><div style="position:absolute;left:1130px;top:149px;width:1px;height:5.6px;background:#454545;"></div><div style="position:absolute;left:1133px;top:80px;width:1px;height:5.6px;background:#454545;"></div><div style="position:absolute;left:1133px;top:149px;width:1px;height:5.6px;background:#454545;"></div><div style="position:absolute;left:1136px;top:80px;width:1px;height:5.6px;background:#454545;"></div><div style="position:absolute;left:1136px;top:149px;width:1px;height:5.6px;background:#454545;"></div><div style="position:absolute;left:1139px;top:80px;width:1px;height:5.6px;background:#454545;"></div><div style="position:absolute;left:1139px;top:149px;width:1px;height:5.6px;background:#454545;"></div><div style="position:absolute;left:1142px;top:80px;width:1px;height:5.6px;background:#454545;"></div><div style="position:absolute;left:1142px;top:149px;width:1px;height:5.6px;background:#454545;"></div><div style="position:absolute;left:1145px;top:80px;width:1px;height:5.6px;background:#454545;"></div><div style="position:absolute;left:1145px;top:149px;width:1px;height:5.6px;background:#454545;"></div><svg style="position:absolute;left:1132px;top:91px;" width="17" height="19" viewBox="0 0 17 19"><rect x="1.5" y="1.5" width="4" height="4" fill="none" stroke="#dcdcdc" stroke-width="1"/><rect x="1.5" y="7.5" width="4" height="4" fill="none" stroke="#dcdcdc" stroke-width="1"/><rect x="1" y="13" width="5" height="5" fill="#dcdcdc"/><path d="M9.5 16.5 C13.5 14 15 8 11.5 4.8" stroke="#dcdcdc" stroke-width="1.9" fill="none"/><path d="M8.3 2 L14 3.2 L10.2 7.2 Z" fill="#dcdcdc"/></svg><svg style="position:absolute;left:1133px;top:121px;" width="15" height="16" viewBox="0 0 15 16"><path d="M1.5 1 L14 8 L1.5 15 Z" fill="#e0e0e0"/></svg><svg style="position:absolute;left:1132px;top:161px;" width="17" height="18" viewBox="0 0 17 18"><path d="M1.6 14.2 L7 1.8 L12.4 14.2 M3.6 10 L10.4 10" stroke="#e0e0e0" stroke-width="1.7" fill="none"/><path d="M14.8 0 L14.8 17" stroke="#e0e0e0" stroke-width="1.2"/></svg><svg style="position:absolute;left:1133px;top:189px;" width="14" height="18" viewBox="0 0 14 18"><path d="M8.5 1 L8.5 9.5 C3 9.5 1 7.5 1 5.2 C1 2.5 3.5 1 6.5 1 Z" fill="#e0e0e0"/><path d="M6 1.3 L12.5 1.3 M8.8 1 L8.8 16.5 M11.8 1 L11.8 16.5" stroke="#e0e0e0" stroke-width="1.3" fill="none"/></svg><div style="position:absolute;left:1157px;top:77px;width:3.6px;height:895.6px;background:#363636;"></div><div style="position:absolute;left:1160px;top:77px;width:232.6px;height:27.6px;background:#424242;"></div><div style="position:absolute;left:1160px;top:77px;width:45.6px;height:27.6px;background:#535353;"></div><div style="position:absolute;left:1205px;top:77px;width:63.6px;height:27.6px;background:#494949;"></div><div style="position:absolute;left:1268px;top:77px;width:1px;height:27.6px;background:#3a3a3a;"></div><div style="position:absolute;left:1169px;top:85.78px;font-size:10.3px;line-height:10.3px;color:#f0f0f0;white-space:nowrap;-webkit-text-stroke:0.45px #f0f0f0;">Color</div><div style="position:absolute;left:1213.5px;top:85.78px;font-size:10.3px;line-height:10.3px;color:#ababab;white-space:nowrap;-webkit-text-stroke:0.3px #ababab;">Swatches</div><div style="position:absolute;left:1378px;top:87px;width:11.6px;height:1px;background:#cfcfcf;"></div><div style="position:absolute;left:1378px;top:89px;width:11.6px;height:1px;background:#cfcfcf;"></div><div style="position:absolute;left:1378px;top:91px;width:11.6px;height:1px;background:#cfcfcf;"></div><div style="position:absolute;left:1378px;top:93px;width:11.6px;height:1px;background:#cfcfcf;"></div><div style="position:absolute;left:1160px;top:104px;width:232.6px;height:120.6px;background:#535353;"></div><div style="position:absolute;left:1179px;top:125px;width:20px;height:20px;background:#f4000c;box-sizing:border-box;border:1px solid #f4f4f4;outline:1px solid #2a2a2a;"></div><div style="position:absolute;left:1169px;top:115px;width:21px;height:21px;background:#f4000c;box-sizing:border-box;border:1px solid #f4f4f4;outline:1px solid #2a2a2a;"></div><svg style="position:absolute;left:1168px;top:167px;" width="13" height="13" viewBox="0 0 13 13"><path d="M6.5 0.5 L12.5 12.5 L0.5 12.5 Z" fill="#e6e6e6"/><path d="M6.5 4.5 L6.5 9" stroke="#535353" stroke-width="1.6"/><rect x="5.7" y="10" width="1.6" height="1.6" fill="#535353"/></svg><div style="position:absolute;left:1184px;top:168px;width:13px;height:13px;background:#e84040;box-sizing:border-box;border:1px solid #f0f0f0;"></div><div style="position:absolute;left:1205px;top:112px;width:138.6px;height:91.6px;background:;background:linear-gradient(to bottom,rgba(0,0,0,0) 0%,rgba(0,0,0,0.06) 20%,rgba(0,0,0,0.18) 40%,rgba(0,0,0,0.3) 55%,rgba(0,0,0,0.55) 70%,rgba(0,0,0,0.85) 85%,#000 97%),linear-gradient(to right,#fff 0%,#ffc4ca 20%,#ff7a88 42%,#ff3a4c 62%,#ff0a1e 85%,#ff0010 100%);"></div><svg style="position:absolute;left:1329px;top:111px;" width="12" height="12" viewBox="0 0 12 12"><circle cx="6" cy="6" r="4.8" stroke="#5a0008" stroke-width="1.1" fill="none"/></svg><div style="position:absolute;left:1360px;top:112px;width:19.6px;height:91.6px;background:;background:linear-gradient(to bottom,#ff0010 0%,#ff0090 8%,#f0f 20%,#6000ff 28%,#00f 34%,#00a0ff 44%,#0ff 52%,#00ff40 62%,#0f0 72%,#60ff00 80%,#ff0 84%,#ff8000 92%,#ff2000 100%);"></div><svg style="position:absolute;left:1349px;top:107px;" width="9" height="11" viewBox="0 0 9 11"><path d="M1 1 L8 5.5 L1 10 Z" fill="#f0f0f0"/></svg><div style="position:absolute;left:1160px;top:224px;width:232.6px;height:2px;background:#3a3a3a;"></div><div style="position:absolute;left:1160px;top:226px;width:232.6px;height:29.6px;background:#424242;"></div><div style="position:absolute;left:1160px;top:226px;width:67.6px;height:29.6px;background:#494949;"></div><div style="position:absolute;left:1227px;top:226px;width:79.6px;height:29.6px;background:#535353;"></div><div style="position:absolute;left:1306px;top:226px;width:47.6px;height:29.6px;background:#494949;"></div><div style="position:absolute;left:1353px;top:226px;width:1px;height:29.6px;background:#3a3a3a;"></div><div style="position:absolute;left:1169px;top:235.78px;font-size:10.3px;line-height:10.3px;color:#ababab;white-space:nowrap;-webkit-text-stroke:0.3px #ababab;">Properties</div><div style="position:absolute;left:1237px;top:235.70px;font-size:10.4px;line-height:10.4px;color:#f0f0f0;white-space:nowrap;-webkit-text-stroke:0.45px #f0f0f0;">Adjustments</div><div style="position:absolute;left:1315px;top:235.78px;font-size:10.3px;line-height:10.3px;color:#ababab;white-space:nowrap;-webkit-text-stroke:0.3px #ababab;">Styles</div><div style="position:absolute;left:1378px;top:237px;width:11.6px;height:1px;background:#cfcfcf;"></div><div style="position:absolute;left:1378px;top:239px;width:11.6px;height:1px;background:#cfcfcf;"></div><div style="position:absolute;left:1378px;top:241px;width:11.6px;height:1px;background:#cfcfcf;"></div><div style="position:absolute;left:1378px;top:243px;width:11.6px;height:1px;background:#cfcfcf;"></div><div style="position:absolute;left:1160px;top:255px;width:232.6px;height:217.6px;background:#535353;"></div><div style="position:absolute;left:1169px;top:261.04px;font-size:10px;line-height:10px;color:#e0e0e0;white-space:nowrap;-webkit-text-stroke:0.22px #e0e0e0;">Add an adjustment</div><svg style="position:absolute;left:1205px;top:275px;" width="19" height="19" viewBox="0 0 19 19"><circle cx="9.5" cy="9.5" r="5" fill="none" stroke="#e4e4e4" stroke-width="1.3"/><path d="M9.5 4.5 A5 5 0 0 1 9.5 14.5 Z" fill="#e4e4e4"/><circle cx="17.50" cy="9.50" r="1" fill="#e4e4e4"/><circle cx="15.16" cy="15.16" r="1" fill="#e4e4e4"/><circle cx="9.50" cy="17.50" r="1" fill="#e4e4e4"/><circle cx="3.84" cy="15.16" r="1" fill="#e4e4e4"/><circle cx="1.50" cy="9.50" r="1" fill="#e4e4e4"/><circle cx="3.84" cy="3.84" r="1" fill="#e4e4e4"/><circle cx="9.50" cy="1.50" r="1" fill="#e4e4e4"/><circle cx="15.16" cy="3.84" r="1" fill="#e4e4e4"/></svg><svg style="position:absolute;left:1229px;top:277px;" width="20" height="14" viewBox="0 0 20 14"><path d="M1 13 L1 7 L2.5 5 L3.5 8 L5 3 L6 7 L7.5 1 L9 6 L10.5 2 L12 7 L13.5 4 L15 8 L16.5 5 L18 8 L19 7 L19 13 Z" fill="#e4e4e4"/></svg><svg style="position:absolute;left:1254px;top:277px;" width="18" height="15" viewBox="0 0 18 15"><rect x="1" y="1" width="16" height="13" fill="none" stroke="#e4e4e4" stroke-width="1.1"/><path d="M6.3 1 L6.3 14 M11.6 1 L11.6 14 M1 5.3 L17 5.3 M1 9.6 L17 9.6" stroke="#a8a8a8" stroke-width="1"/><path d="M2 13 C8 13 10 2 16 2" stroke="#e4e4e4" stroke-width="1.3" fill="none"/></svg><svg style="position:absolute;left:1278px;top:278px;" width="18" height="15" viewBox="0 0 18 15"><rect x="1" y="1" width="16" height="13" fill="#e4e4e4"/><path d="M17 1 L17 14 L1 14 Z" fill="#484848"/><rect x="1" y="1" width="16" height="13" fill="none" stroke="#e4e4e4" stroke-width="1.2"/><path d="M3 5 L8 5 M5.5 2.5 L5.5 7.5" stroke="#333" stroke-width="1.3"/><path d="M10.5 10.5 L15 10.5" stroke="#e4e4e4" stroke-width="1.3"/></svg><svg style="position:absolute;left:1302px;top:278px;" width="17" height="15" viewBox="0 0 17 15"><defs><radialGradient id="vg"><stop offset="0" stop-color="#3a3a3a"/><stop offset="1" stop-color="#8a8a8a"/></radialGradient></defs><path d="M1 1.5 L16 1.5 L8.5 14 Z" fill="url(#vg)" stroke="#e4e4e4" stroke-width="1.4" stroke-linejoin="round"/></svg><svg style="position:absolute;left:1194px;top:304px;" width="18" height="15" viewBox="0 0 18 15"><defs><linearGradient id="hg"><stop offset="0" stop-color="#222"/><stop offset="1" stop-color="#ddd"/></linearGradient></defs><rect x="1" y="7.5" width="16" height="6.5" fill="url(#hg)"/><rect x="1" y="1" width="16" height="6.5" fill="#777"/><path d="M3 1 L3 7 M7 1 L7 7 M11 1 L11 7 M15 1 L15 7" stroke="#222" stroke-width="1.4"/><path d="M5 1 L5 7 M9 1 L9 7 M13 1 L13 7" stroke="#ccc" stroke-width="1.2"/><rect x="1" y="1" width="16" height="13" fill="none" stroke="#e4e4e4" stroke-width="1.2"/></svg><svg style="position:absolute;left:1217px;top:303px;" width="20" height="17" viewBox="0 0 20 17"><path d="M2 4 L18 4 M10 2 L10 4" stroke="#e4e4e4" stroke-width="1.2"/><circle cx="10" cy="3" r="1.8" fill="#535353" stroke="#e4e4e4" stroke-width="1.1"/><path d="M4.5 4 L1.5 11 M4.5 4 L7.5 11 M15.5 4 L12.5 11 M15.5 4 L18.5 11" stroke="#e4e4e4" stroke-width="1"/><path d="M1 11 L8 11 A3.5 4 0 0 1 1 11 Z M12 11 L19 11 A3.5 4 0 0 1 12 11 Z" fill="#e4e4e4"/></svg><svg style="position:absolute;left:1242px;top:304px;" width="18" height="15" viewBox="0 0 18 15"><rect x="1" y="1" width="16" height="13" fill="#e4e4e4"/><rect x="2" y="2" width="6.5" height="11" fill="#4a4a4a"/><rect x="1" y="1" width="16" height="13" fill="none" stroke="#e4e4e4" stroke-width="1.2"/></svg><svg style="position:absolute;left:1265px;top:303px;" width="20" height="18" viewBox="0 0 20 18"><path d="M1 5 L5 5 L6.5 3 L10.5 3 L12 5 L15 5 L15 13 L1 13 Z" fill="#e4e4e4"/><circle cx="8" cy="9" r="2.6" fill="#535353" stroke="#e4e4e4" stroke-width="0.8"/><circle cx="15" cy="13.5" r="3.6" fill="#535353" stroke="#e4e4e4" stroke-width="1.4"/></svg><svg style="position:absolute;left:1289px;top:303px;" width="19" height="18" viewBox="0 0 19 18"><circle cx="9.5" cy="6" r="5" fill="#8a8a8a"/><circle cx="6" cy="11.5" r="5" fill="#d0d0d0" opacity="0.9"/><circle cx="13" cy="11.5" r="5" fill="#aaaaaa" opacity="0.9"/><path d="M9.5 8 L8 13 L11 13 Z" fill="#444"/></svg><svg style="position:absolute;left:1314px;top:304px;" width="18" height="15" viewBox="0 0 18 15"><rect x="1" y="1" width="16" height="13" fill="#e4e4e4"/><rect x="2.2" y="2.2" width="4" height="3" fill="#8a8a8a"/><rect x="2.2" y="6.3" width="4" height="3" fill="#5a5a5a"/><rect x="2.2" y="10.4" width="4" height="3" fill="#3e3e3e"/><rect x="7.4" y="2.2" width="4" height="3" fill="#8a8a8a"/><rect x="7.4" y="6.3" width="4" height="3" fill="#5a5a5a"/><rect x="7.4" y="10.4" width="4" height="3" fill="#3e3e3e"/><rect x="12.6" y="2.2" width="4" height="3" fill="#8a8a8a"/><rect x="12.6" y="6.3" width="4" height="3" fill="#5a5a5a"/><rect x="12.6" y="10.4" width="4" height="3" fill="#3e3e3e"/></svg><svg style="position:absolute;left:1206px;top:331px;" width="18" height="15" viewBox="0 0 18 15"><rect x="1" y="1" width="16" height="13" fill="#e4e4e4"/><path d="M1 14 L17 1 L17 14 Z" fill="#cfcfcf"/><ellipse cx="9" cy="7.5" rx="3.2" ry="5.5" transform="rotate(40 9 7.5)" fill="#555"/><rect x="1" y="1" width="16" height="13" fill="none" stroke="#e4e4e4" stroke-width="1.2"/></svg><svg style="position:absolute;left:1230px;top:331px;" width="18" height="15" viewBox="0 0 18 15"><rect x="1" y="1" width="16" height="13" fill="#6a6a6a"/><path d="M1 6 L6 1 M1 10 L10 1 M3 14 L16 1 M7 14 L17 4 M11 14 L17 8" stroke="#bdbdbd" stroke-width="2"/><rect x="1" y="1" width="16" height="13" fill="none" stroke="#e4e4e4" stroke-width="1.2"/></svg><svg style="position:absolute;left:1254px;top:331px;" width="18" height="15" viewBox="0 0 18 15"><rect x="1" y="1" width="16" height="13" fill="#e4e4e4"/><path d="M1.5 10 L5 8 L7 9 L10 5 L13 5 L16 2.5 L16.5 5 L13.5 8 L11 8 L8 11.5 L5 11 L1.5 13 Z" fill="#2a2a2a"/><path d="M9 14 L17 12 L17 14 Z" fill="#2a2a2a"/><rect x="1" y="1" width="16" height="13" fill="none" stroke="#e4e4e4" stroke-width="1.2"/></svg><svg style="position:absolute;left:1278px;top:331px;" width="18" height="15" viewBox="0 0 18 15"><rect x="1" y="1" width="16" height="13" fill="#8a8a8a"/><path d="M1 1 L9 7.5 L17 1 Z" fill="#c8c8c8"/><path d="M1 14 L9 7.5 L17 14 Z" fill="#6e6e6e"/><path d="M1 1 L1 14 L9 7.5 Z" fill="#5a5a5a"/><rect x="1" y="1" width="16" height="13" fill="none" stroke="#e4e4e4" stroke-width="1.2"/></svg><svg style="position:absolute;left:1302px;top:331px;" width="18" height="15" viewBox="0 0 18 15"><defs><linearGradient id="gm"><stop offset="0" stop-color="#111"/><stop offset="1" stop-color="#eee"/></linearGradient></defs><rect x="1" y="1" width="16" height="13" fill="url(#gm)" stroke="#e4e4e4" stroke-width="1.2"/></svg><div style="position:absolute;left:1160px;top:472px;width:232.6px;height:3.6px;background:#3a3a3a;"></div><div style="position:absolute;left:1160px;top:475px;width:232.6px;height:28.6px;background:#424242;"></div><div style="position:absolute;left:1160px;top:475px;width:58.6px;height:28.6px;background:#494949;"></div><div style="position:absolute;left:1218px;top:475px;width:50.6px;height:28.6px;background:#494949;"></div><div style="position:absolute;left:1268px;top:475px;width:48.6px;height:28.6px;background:#535353;"></div><div style="position:absolute;left:1217px;top:475px;width:1px;height:28.6px;background:#3a3a3a;"></div><div style="position:absolute;left:1316px;top:475px;width:1px;height:28.6px;background:#3a3a3a;"></div><div style="position:absolute;left:1168.5px;top:483.84px;font-size:10px;line-height:10px;color:#b4b4b4;white-space:nowrap;-webkit-text-stroke:0.35px #b4b4b4;">Channels</div><div style="position:absolute;left:1231px;top:483.84px;font-size:10px;line-height:10px;color:#b4b4b4;white-space:nowrap;-webkit-text-stroke:0.35px #b4b4b4;">Paths</div><div style="position:absolute;left:1277px;top:483.84px;font-size:10px;line-height:10px;color:#f4f4f4;white-space:nowrap;-webkit-text-stroke:0.4px #f4f4f4;">Layers</div><div style="position:absolute;left:1378px;top:486px;width:11.6px;height:1px;background:#cfcfcf;"></div><div style="position:absolute;left:1378px;top:488px;width:11.6px;height:1px;background:#cfcfcf;"></div><div style="position:absolute;left:1378px;top:490px;width:11.6px;height:1px;background:#cfcfcf;"></div><div style="position:absolute;left:1378px;top:492px;width:11.6px;height:1px;background:#cfcfcf;"></div><div style="position:absolute;left:1160px;top:503px;width:232.6px;height:444.6px;background:#535353;"></div><div style="position:absolute;left:1160px;top:534px;width:232.6px;height:1px;background:#464646;"></div><div style="position:absolute;left:1160px;top:563px;width:232.6px;height:1px;background:#464646;"></div><div style="position:absolute;left:1160px;top:590px;width:232.6px;height:1px;background:#464646;"></div><svg style="position:absolute;left:1312px;top:513px;" width="11" height="15" viewBox="0 0 11 15"><path d="M1 1.5 L10 1.5 M5.5 1.5 L5.5 13.5 M3.5 13.5 L7.5 13.5 M1 1 L1 4 M10 1 L10 4" stroke="#d8d8d8" stroke-width="2" fill="none"/></svg><svg style="position:absolute;left:1334px;top:513px;" width="13" height="13" viewBox="0 0 13 13"><rect x="2" y="2" width="9" height="9" fill="none" stroke="#d8d8d8" stroke-width="1.2"/><circle cx="2" cy="2" r="1.5" fill="#535353" stroke="#d8d8d8"/><circle cx="11" cy="2" r="1.5" fill="#535353" stroke="#d8d8d8"/><circle cx="2" cy="11" r="1.5" fill="#535353" stroke="#d8d8d8"/><circle cx="11" cy="11" r="1.5" fill="#535353" stroke="#d8d8d8"/></svg><svg style="position:absolute;left:1359px;top:513px;" width="12" height="15" viewBox="0 0 12 15"><path d="M3 1 L8 1 L11 4 L11 14 L3 14 Z" fill="none" stroke="#d8d8d8" stroke-width="1.2"/><rect x="0.5" y="8" width="6" height="6" fill="#d8d8d8"/></svg><div style="position:absolute;left:1382px;top:512px;width:8px;height:18px;background:#3c3c3c;border-radius:4px;"></div><div style="position:absolute;left:1382px;top:512px;width:8px;height:8px;background:#e6e6e6;border-radius:4px;"></div><div style="position:absolute;left:1313px;top:544.53px;font-size:10px;line-height:10px;color:#d0d0d0;white-space:nowrap;-webkit-text-stroke:0.22px #d0d0d0;">acity:</div><div style="position:absolute;left:1340px;top:541px;width:35px;height:15px;background:#3d3d3d;border-radius:2px;"></div><div style="position:absolute;left:1344px;top:544.53px;font-size:10px;line-height:10px;color:#e8e8e8;white-space:nowrap;-webkit-text-stroke:0.22px #e8e8e8;">100%</div><div style="position:absolute;left:1376px;top:541px;width:14px;height:15px;background:#3d3d3d;border-radius:2px;"></div><svg style="position:absolute;left:1379px;top:546px;" width="9" height="6" viewBox="0 0 9 6"><path d="M1 1 L4.5 4.5 L8 1" stroke="#bcbcbc" stroke-width="1.2" fill="none"/></svg><div style="position:absolute;left:1320px;top:572.53px;font-size:10px;line-height:10px;color:#d0d0d0;white-space:nowrap;-webkit-text-stroke:0.22px #d0d0d0;">Fill:</div><div style="position:absolute;left:1340px;top:569px;width:35px;height:15px;background:#3d3d3d;border-radius:2px;"></div><div style="position:absolute;left:1344px;top:572.53px;font-size:10px;line-height:10px;color:#e8e8e8;white-space:nowrap;-webkit-text-stroke:0.22px #e8e8e8;">100%</div><div style="position:absolute;left:1376px;top:569px;width:14px;height:15px;background:#3d3d3d;border-radius:2px;"></div><svg style="position:absolute;left:1379px;top:574px;" width="9" height="6" viewBox="0 0 9 6"><path d="M1 1 L4.5 4.5 L8 1" stroke="#bcbcbc" stroke-width="1.2" fill="none"/></svg><div style="position:absolute;left:1160px;top:593px;width:219.6px;height:39.6px;background:#6a6a6a;"></div><div style="position:absolute;left:1160px;top:632px;width:219.6px;height:1px;background:#3f3f3f;"></div><div style="position:absolute;left:1160px;top:633px;width:219.6px;height:40.6px;background:#4f4f4f;"></div><div style="position:absolute;left:1160px;top:673px;width:219.6px;height:1px;background:#3f3f3f;"></div><div style="position:absolute;left:1160px;top:674px;width:219.6px;height:39.6px;background:#4f4f4f;"></div><div style="position:absolute;left:1160px;top:713px;width:219.6px;height:1px;background:#3f3f3f;"></div><svg style="position:absolute;left:1352px;top:689px;" width="12" height="14" viewBox="0 0 12 14"><path d="M3 6 L3 4 C3 0.8 9 0.8 9 4 L9 6" stroke="#d8d8d8" stroke-width="1.3" fill="none"/><rect x="1" y="6" width="10" height="7.5" fill="none" stroke="#d8d8d8" stroke-width="1.3"/><rect x="5.3" y="8.5" width="1.5" height="2.5" fill="#d8d8d8"/></svg><div style="position:absolute;left:1160px;top:714px;width:219.6px;height:233.6px;background:#4d4d4d;"></div><div style="position:absolute;left:1379px;top:591px;width:13.6px;height:356.6px;background:#4a4a4a;"></div><div style="position:absolute;left:1160px;top:947px;width:232.6px;height:25.6px;background:#535353;"></div><div style="position:absolute;left:1160px;top:946px;width:232.6px;height:1px;background:#454545;"></div><svg style="position:absolute;left:1329px;top:953px;" width="12" height="14" viewBox="0 0 12 14"><path d="M4 1 L11 1 L11 12 L1 12 L1 4 Z M1 4 L4 4 L4 1" fill="none" stroke="#d8d8d8" stroke-width="1.2"/></svg><svg style="position:absolute;left:1355px;top:952px;" width="12" height="15" viewBox="0 0 12 15"><path d="M1 3 L11 3 M4 3 L4 1 L8 1 L8 3 M2 4 L2.8 14 L9.2 14 L10 4 M4.5 6 L4.5 12 M6 6 L6 12 M7.5 6 L7.5 12" stroke="#d8d8d8" stroke-width="1.1" fill="none"/></svg><div style="position:absolute;left:1392px;top:64px;width:4.6px;height:908.6px;background:#4a4a4a;"></div><div style="position:absolute;left:1160px;top:503px;width:3.6px;height:470.6px;background:#444444;"></div><div style="position:absolute;left:1163px;top:506px;width:151.6px;height:470.6px;background:#1f64a6;"></div><div style="position:absolute;left:1313.5px;top:506px;width:1px;height:470.6px;background:#3e5a74;"></div><div style="position:absolute;left:1165px;top:508px;width:149.1px;height:470.6px;background:#ffffff;"></div><div style="position:absolute;left:1166.5px;top:511.04px;font-size:10px;line-height:10px;color:#000000;white-space:nowrap;-webkit-text-stroke:0.22px #000000;">Normal</div><div style="position:absolute;left:1166.5px;top:526.03px;font-size:10px;line-height:10px;color:#000000;white-space:nowrap;-webkit-text-stroke:0.22px #000000;">Dissolve</div><div style="position:absolute;left:1165px;top:545px;width:149.1px;height:1px;background:#a8a8a8;"></div><div style="position:absolute;left:1166.5px;top:556.03px;font-size:10px;line-height:10px;color:#000000;white-space:nowrap;-webkit-text-stroke:0.22px #000000;">Darken</div><div style="position:absolute;left:1166.5px;top:571.03px;font-size:10px;line-height:10px;color:#000000;white-space:nowrap;-webkit-text-stroke:0.22px #000000;">Multiply</div><div style="position:absolute;left:1166.5px;top:586.03px;font-size:10px;line-height:10px;color:#000000;white-space:nowrap;-webkit-text-stroke:0.22px #000000;">Color Burn</div><div style="position:absolute;left:1166.5px;top:601.03px;font-size:10px;line-height:10px;color:#000000;white-space:nowrap;-webkit-text-stroke:0.22px #000000;">Linear Burn</div><div style="position:absolute;left:1166.5px;top:616.03px;font-size:10px;line-height:10px;color:#000000;white-space:nowrap;-webkit-text-stroke:0.22px #000000;">Darker Color</div><div style="position:absolute;left:1165px;top:635px;width:149.1px;height:1px;background:#a8a8a8;"></div><div style="position:absolute;left:1166.5px;top:646.03px;font-size:10px;line-height:10px;color:#000000;white-space:nowrap;-webkit-text-stroke:0.22px #000000;">Lighten</div><div style="position:absolute;left:1166.5px;top:661.03px;font-size:10px;line-height:10px;color:#000000;white-space:nowrap;-webkit-text-stroke:0.22px #000000;">Screen</div><div style="position:absolute;left:1165px;top:673px;width:148.5px;height:15px;background:#0a72d8;box-sizing:border-box;border:1px dotted #12335a;"></div><div style="position:absolute;left:1166.5px;top:676.03px;font-size:10px;line-height:10px;color:#ffffff;white-space:nowrap;-webkit-text-stroke:0.22px #ffffff;">Color Dodge</div><div style="position:absolute;left:1166.5px;top:691.03px;font-size:10px;line-height:10px;color:#000000;white-space:nowrap;-webkit-text-stroke:0.22px #000000;">Linear Dodge (Add)</div><div style="position:absolute;left:1166.5px;top:706.03px;font-size:10px;line-height:10px;color:#000000;white-space:nowrap;-webkit-text-stroke:0.22px #000000;">Lighter Color</div><div style="position:absolute;left:1165px;top:725px;width:149.1px;height:1px;background:#a8a8a8;"></div><div style="position:absolute;left:1166.5px;top:736.03px;font-size:10px;line-height:10px;color:#000000;white-space:nowrap;-webkit-text-stroke:0.22px #000000;">Overlay</div><div style="position:absolute;left:1166.5px;top:751.03px;font-size:10px;line-height:10px;color:#000000;white-space:nowrap;-webkit-text-stroke:0.22px #000000;">Soft Light</div><div style="position:absolute;left:1166.5px;top:766.03px;font-size:10px;line-height:10px;color:#000000;white-space:nowrap;-webkit-text-stroke:0.22px #000000;">Hard Light</div><div style="position:absolute;left:1166.5px;top:781.03px;font-size:10px;line-height:10px;color:#000000;white-space:nowrap;-webkit-text-stroke:0.22px #000000;">Vivid Light</div><div style="position:absolute;left:1166.5px;top:796.03px;font-size:10px;line-height:10px;color:#000000;white-space:nowrap;-webkit-text-stroke:0.22px #000000;">Linear Light</div><div style="position:absolute;left:1166.5px;top:811.03px;font-size:10px;line-height:10px;color:#000000;white-space:nowrap;-webkit-text-stroke:0.22px #000000;">Pin Light</div><div style="position:absolute;left:1166.5px;top:826.03px;font-size:10px;line-height:10px;color:#000000;white-space:nowrap;-webkit-text-stroke:0.22px #000000;">Hard Mix</div><div style="position:absolute;left:1165px;top:845px;width:149.1px;height:1px;background:#a8a8a8;"></div><div style="position:absolute;left:1166.5px;top:856.03px;font-size:10px;line-height:10px;color:#000000;white-space:nowrap;-webkit-text-stroke:0.22px #000000;">Difference</div><div style="position:absolute;left:1166.5px;top:871.03px;font-size:10px;line-height:10px;color:#000000;white-space:nowrap;-webkit-text-stroke:0.22px #000000;">Exclusion</div><div style="position:absolute;left:1166.5px;top:886.03px;font-size:10px;line-height:10px;color:#000000;white-space:nowrap;-webkit-text-stroke:0.22px #000000;">Subtract</div><div style="position:absolute;left:1166.5px;top:901.03px;font-size:10px;line-height:10px;color:#000000;white-space:nowrap;-webkit-text-stroke:0.22px #000000;">Divide</div><div style="position:absolute;left:1165px;top:920px;width:149.1px;height:1px;background:#a8a8a8;"></div><div style="position:absolute;left:1166.5px;top:931.03px;font-size:10px;line-height:10px;color:#000000;white-space:nowrap;-webkit-text-stroke:0.22px #000000;">Hue</div><div style="position:absolute;left:1166.5px;top:946.03px;font-size:10px;line-height:10px;color:#000000;white-space:nowrap;-webkit-text-stroke:0.22px #000000;">Saturation</div><div style="position:absolute;left:1166.5px;top:961.03px;font-size:10px;line-height:10px;color:#000000;white-space:nowrap;-webkit-text-stroke:0.22px #000000;">Color</div></div></div></body></html>
